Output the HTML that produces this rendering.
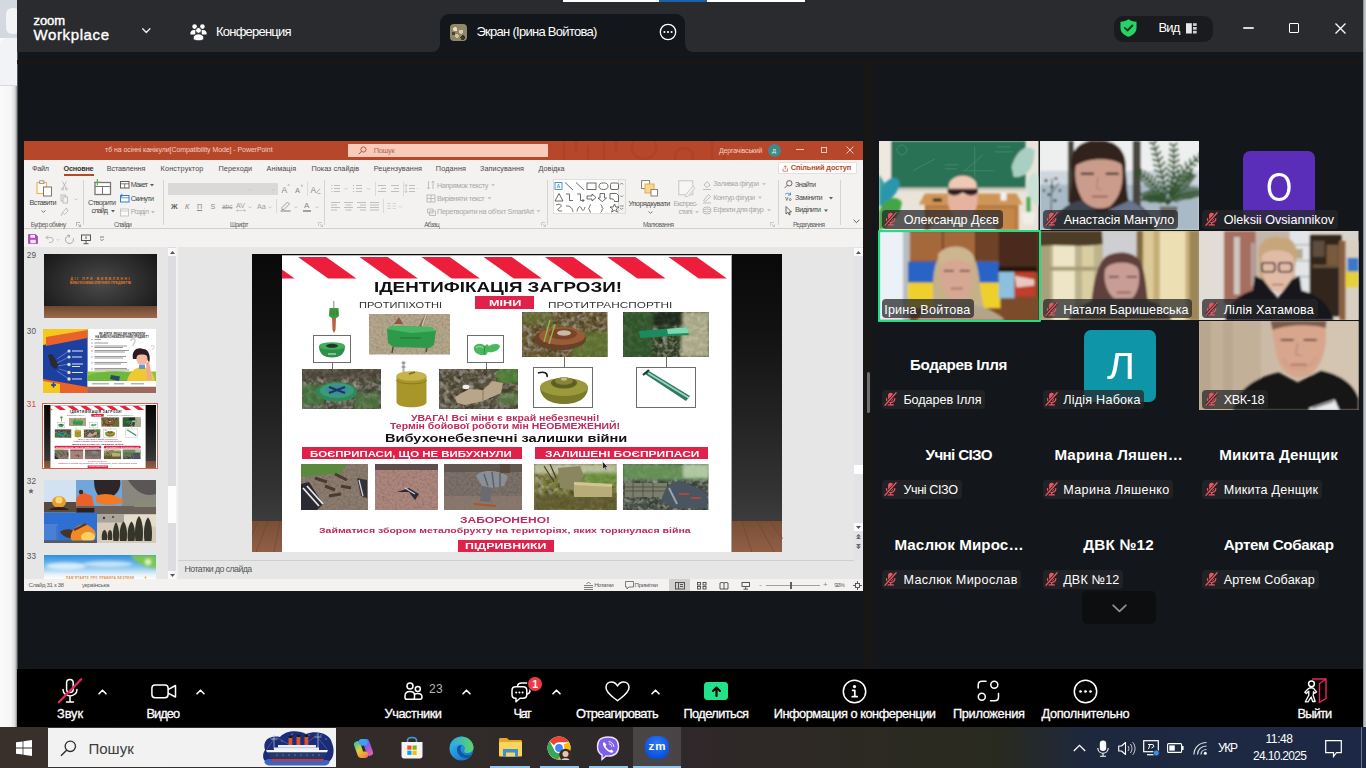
<!DOCTYPE html>
<html lang="uk"><head><meta charset="utf-8"><title>Zoom Workplace</title>
<style>
*{box-sizing:border-box;margin:0;padding:0}
html,body{width:1366px;height:768px;overflow:hidden;background:#13161a}
body{position:relative;font-family:"Liberation Sans",sans-serif;color:#fff}
.a{position:absolute}
.t{position:absolute;white-space:nowrap;line-height:1}
svg{position:absolute;overflow:visible}
</style></head><body>
<!-- left desktop strip -->
<div class="a" id="strip" style="left:0;top:0;width:18px;height:727px;background:linear-gradient(90deg,#fbfbfb 0,#f6f6f6 11px,#d9d9d9 15px,#8a8a8a 17px,#222 18px)"></div>
<div class="a" style="left:0;top:0;width:17px;height:38px;background:#d4d9e1"></div>
<div class="a" style="left:6px;top:8px;width:14px;height:26px;background:#f3f4f6;border-radius:6px"></div>
<div class="a" style="left:0;top:38px;width:17px;height:48px;background:#f1f3f6;border-radius:8px 0 0 0"></div>
<div class="a" style="left:0;top:85px;width:17px;height:1px;background:#d8d8d8"></div>

<!-- ZOOM TITLE BAR -->
<div class="a" id="ztitle" style="left:17px;top:0;width:1349px;height:52px;background:#2a2b2e"></div>
<div class="a" style="left:563px;top:0;width:242px;height:1.500px;background:#fff"></div>
<div class="a" style="left:659px;top:0;width:48px;height:1.500px;background:#1d5fa8"></div>
<div class="a" id="ztab" style="left:440px;top:14px;width:245px;height:38px;background:#13161a;border-radius:9px 9px 0 0"></div>


<div class="a" style="left:1363px;top:0;width:3px;height:727px;background:linear-gradient(90deg,#6a6c6f,#b4b7bb 1px,#c4c7ca)"></div>
<!-- flares of active tab -->
<svg style="left:432px;top:44px" width="8" height="8"><path d="M8 0V8H0A8 8 0 0 0 8 0Z" fill="#13161a"></path></svg>
<svg style="left:685px;top:44px" width="8" height="8"><path d="M0 0V8H8A8 8 0 0 1 0 0Z" fill="#13161a"></path></svg>
<span class="t" style="left: 33.5px; font-size: 13px; color: rgb(255, 255, 255); -webkit-text-stroke: 0.45px rgb(255, 255, 255); letter-spacing: -0.099px; top: 14.3px;">zoom</span>
<span class="t" style="left: 33.5px; font-size: 15px; color: rgb(255, 255, 255); -webkit-text-stroke: 0.35px rgb(255, 255, 255); letter-spacing: 0.613px; top: 27.1px;">Workplace</span>
<svg style="left:142px;top:28px" width="9" height="6" viewBox="0 0 9 6"><path d="M.7.8 4.3 4.4 7.9.8" fill="none" stroke="#e8e8e8" stroke-width="1.4" stroke-linecap="round" stroke-linejoin="round"></path></svg>
<!-- people icon -->
<svg style="left:190px;top:23.5px" width="17" height="17" viewBox="0 0 17 17" fill="#fff"><circle cx="4.6" cy="2.6" r="2.3"></circle><circle cx="12.4" cy="2.6" r="2.3"></circle><circle cx="8.5" cy="6.4" r="2.9" stroke="#2a2b2e" stroke-width="1"></circle><path d="M.3 9.800C.3 7.400 1.800 6 4 6h1.300v4.500H.9C.5 10.500.3 10.200.3 9.800ZM16.700 9.800C16.700 7.400 15.200 6 13 6h-1.300v4.500h4.400c.4 0 .6-.3.600-.7Z"></path><path d="M3.200 14.200c0-2.700 2.300-4.300 5.300-4.300s5.300 1.600 5.300 4.300c0 1.400-1.700 2.500-5.300 2.500s-5.300-1.100-5.300-2.500Z" stroke="#2a2b2e" stroke-width=".8"></path></svg>
<span class="t" style="left: 216px; font-size: 13px; color: rgb(255, 255, 255); letter-spacing: -0.78px; top: 24.6px;">Конференция</span>
<!-- tab avatar -->
<div class="a" style="left:450px;top:24px;width:17px;height:16.5px;border-radius:4px;background:
radial-gradient(circle at 30% 30%,#e9dfc0 0 12%,transparent 13%),radial-gradient(circle at 65% 45%,#d8cba2 0 14%,transparent 15%),radial-gradient(circle at 40% 70%,#cfc39a 0 12%,transparent 13%),radial-gradient(circle at 75% 80%,#3a352c 0 12%,transparent 13%),radial-gradient(circle at 20% 55%,#4a4436 0 10%,transparent 11%),#8f8768"></div>
<span class="t" style="left: 476.4px; font-size: 13px; color: rgb(255, 255, 255); letter-spacing: -0.713px; top: 24.7px;">Экран (Ірина Войтова)</span>
<svg style="left:659px;top:23px" width="18" height="18" viewBox="0 0 18 18"><circle cx="9" cy="9" r="7.7" fill="none" stroke="#fff" stroke-width="1.3"></circle><circle cx="5.400" cy="9" r="1.050" fill="#fff"></circle><circle cx="9" cy="9" r="1.050" fill="#fff"></circle><circle cx="12.600" cy="9" r="1.050" fill="#fff"></circle></svg>
<!-- view pill -->
<div class="a" style="left:1113.500px;top:16px;width:99.500px;height:26px;border-radius:9px;background:#1a1b1e"></div>
<svg style="left:1120px;top:19px" width="17" height="18" viewBox="0 0 17 18"><path d="M8.500.300C10.600 1.900 13.300 2.700 16.500 2.800V9c0 4.200-3.300 7.200-8 8.800C3.800 16.200.500 13.200.500 9V2.800C3.700 2.700 6.400 1.900 8.500.300Z" fill="#26d366"></path><path d="M4.800 8.900 7.500 11.500 12.400 6.500" fill="none" stroke="#173a25" stroke-width="1.900" stroke-linecap="round" stroke-linejoin="round"></path></svg>
<span class="t" style="left: 1158.4px; font-size: 13px; color: rgb(255, 255, 255); letter-spacing: -0.766px; top: 21px;">Вид</span>
<svg style="left:1186px;top:23px" width="11" height="11" viewBox="0 0 11 11"><rect x="0" y=".2" width="5.800" height="10.300" fill="#e9e9e9"></rect><rect x="7" y=".2" width="3.700" height="2.700" fill="#cfcfcf"></rect><rect x="7" y="4" width="3.700" height="2.700" fill="#cfcfcf"></rect><rect x="7" y="7.800" width="3.700" height="2.700" fill="#cfcfcf"></rect></svg>
<div class="a" style="left:1242.500px;top:27.300px;width:11.500px;height:1.500px;background:#d9d9d9;border-radius:1px"></div>
<div class="a" style="left:1288.700px;top:23px;width:10.600px;height:10.300px;border:1.400px solid #fff;border-radius:1px"></div>
<svg style="left:1334.500px;top:23px" width="11" height="11" viewBox="0 0 11 11"><path d="M.5.500 10.500 10.500M10.500.500.500 10.500" stroke="#fff" stroke-width="1.300"></path></svg>

<!-- ===== POWERPOINT WINDOW (shared screen) ===== -->
<div class="a" id="ppt" style="left:24px;top:141px;width:839px;height:450px;background:#e6e6e6;overflow:hidden">
<style>
#ppt .t{color:#4a4a4a;font-size:7.250px}
#ppt .g{color:#a9a7a5}
#ppt .lb{color:#605e5c;font-size:6.4px}
#ppt .sep{position:absolute;top:39px;width:1px;height:45px;background:#d6d4d2}
</style>
<!-- title bar -->
<div class="a" style="left:0;top:0;width:839px;height:19px;background:#b7472a"></div>
<svg style="left:520px;top:0" width="200" height="19" viewBox="0 0 200 19" opacity=".32"><g fill="none" stroke="#9f3a20" stroke-width="2.5"><circle cx="100" cy="6" r="12"></circle><circle cx="140" cy="16" r="9"></circle><path d="M20 0V19M32 0V12M44 4V19M60 0V19M72 0V10M168 0V19M180 6V19"></path></g></svg>
<span class="t" style="left: 81px; font-size: 7px; color: rgb(243, 207, 195); letter-spacing: -0.073px; top: 5.47px;">тб на осінні канікули[Compatibility Mode]  -  PowerPoint</span>
<div class="a" style="left:324px;top:3px;width:200px;height:13px;background:#f9cbb9"></div>
<svg style="left:334px;top:5px" width="9" height="9" viewBox="0 0 9 9"><circle cx="5.400" cy="3.500" r="2.600" fill="none" stroke="#a0452f" stroke-width=".8"></circle><path d="M3.500 5.400.8 8.200" stroke="#a0452f" stroke-width=".9"></path></svg>
<span class="t" style="left: 349.7px; font-size: 7.4px; color: rgb(176, 106, 85); letter-spacing: -0.32px; top: 5.74px;">Пошук</span>
<span class="t" style="left: 695px; font-size: 7px; color: rgb(243, 207, 195); letter-spacing: -0.179px; top: 5.87px;">Дергачівський</span>
<div class="a" style="left:744px;top:3px;width:13px;height:13px;border-radius:50%;background:#3f8a8c"></div>
<span class="t" style="left: 748px; font-size: 6px; color: rgb(231, 243, 243); top: 6.52px;">Д</span>
<div class="a" style="left:772px;top:8px;width:8px;height:1px;background:#f0c9bd"></div>
<div class="a" style="left:797px;top:6px;width:6px;height:6px;border:1px solid #f0c9bd"></div>
<svg style="left:822px;top:5px" width="8" height="8" viewBox="0 0 8 8"><path d="M.5.500 7.500 7.500M7.500.500.500 7.500" stroke="#f6ddd5" stroke-width=".9"></path></svg>
<!-- tab row + ribbon -->
<div class="a" style="left:0;top:19px;width:839px;height:68px;background:#f3f2f1"></div>
<div class="a" style="left:0;top:87px;width:839px;height:1px;background:#d2d0ce"></div>
<div class="a" style="left:0;top:88px;width:839px;height:18px;background:#f3f2f1"></div>
<span class="t" style="left: 8px; letter-spacing: -0.276px; top: 23.66px;">Файл</span>
<span class="t" style="left: 39.6px; font-weight: bold; color: rgb(51, 51, 51); letter-spacing: -0.227px; top: 23.66px;">Основне</span>
<div class="a" style="left:39.500px;top:33.300px;width:30.500px;height:1.700px;background:#b7472a"></div>
<span class="t" style="left: 82.7px; letter-spacing: -0.103px; top: 23.66px;">Вставлення</span>
<span class="t" style="left: 136.6px; letter-spacing: 0.146px; top: 23.66px;">Конструктор</span>
<span class="t" style="left: 194.4px; letter-spacing: 0.134px; top: 23.66px;">Переходи</span>
<span class="t" style="left: 242.5px; letter-spacing: 0.078px; top: 23.66px;">Анімація</span>
<span class="t" style="left: 287.5px; letter-spacing: 0.017px; top: 23.66px;">Показ слайдів</span>
<span class="t" style="left: 349.7px; letter-spacing: 0.094px; top: 23.66px;">Рецензування</span>
<span class="t" style="left: 411.8px; letter-spacing: 0.153px; top: 23.66px;">Подання</span>
<span class="t" style="left: 456px; letter-spacing: 0.063px; top: 23.66px;">Записування</span>
<span class="t" style="left: 514.6px; letter-spacing: -0.016px; top: 23.66px;">Довідка</span>
<div class="a" style="left:754px;top:21px;width:79px;height:12px;background:#fff;border:1px solid #e3dfdc;border-radius:1px"></div>
<svg style="left:757.500px;top:23.500px" width="7" height="7" viewBox="0 0 7 7"><path d="M1 3.500V6.200H5.500V3.500M3.300 4.300V.8M1.800 2.200 3.300.7 4.800 2.200" fill="none" stroke="#c0583d" stroke-width=".7"></path></svg>
<span class="t" style="left: 766.8px; font-weight: bold; color: rgb(183, 71, 42); font-size: 7.4px; letter-spacing: -0.128px; top: 23.44px;">Спільний доступ</span>
<!-- Clipboard group -->
<svg style="left:12px;top:39px" width="17" height="17" viewBox="0 0 17 17"><rect x="1" y="2.500" width="9.500" height="11" fill="#fdfaf0" stroke="#e6b45a" stroke-width="1.100"></rect><rect x="3.700" y=".8" width="4.200" height="2.800" fill="#f3f2f1" stroke="#8a8886" stroke-width=".8"></rect><rect x="7.500" y="7" width="8" height="9" fill="#fff" stroke="#6b6968" stroke-width=".9"></rect></svg>
<span class="t" style="left: 5.6px; letter-spacing: -0.574px; top: 57.66px;">Вставити</span>
<svg style="left:16.500px;top:69px" width="5" height="3" viewBox="0 0 5 3"><path d="M.5.500 2.500 2.300 4.500.500" fill="none" stroke="#605e5c" stroke-width=".8"></path></svg>
<svg style="left:36px;top:39.500px" width="9" height="37" viewBox="0 0 9 37" fill="none" stroke="#b3b0ad" stroke-width=".8"><path d="M2.500.500 6 7M6.500.500 3 7"></path><circle cx="2.600" cy="8" r="1"></circle><circle cx="6.400" cy="8" r="1"></circle><rect x="1" y="14" width="4.500" height="6"></rect><rect x="3" y="16" width="4.500" height="6" fill="#f3f2f1"></rect><path d="M6.500 27 2.500 31.500 4.500 33.500 8 30ZM2.500 32 1 35"></path></svg>
<svg style="left:50px;top:57px" width="4" height="3" viewBox="0 0 4 3"><path d="M.4.500 2 2 3.600.500" fill="none" stroke="#bbb" stroke-width=".7"></path></svg>
<span class="t lb" style="left: 6.7px; letter-spacing: -0.494px; top: 80.58px;">Буфер обміну</span>
<svg style="left:51.500px;top:81px" width="5" height="5" viewBox="0 0 5 5"><path d="M.5 4V.500H4M2 2 4.500 4.500M4.500 2.500V4.500H2.500" fill="none" stroke="#8a8886" stroke-width=".6"></path></svg>
<div class="sep" style="left:58.500px"></div>
<!-- Slides group -->
<svg style="left:69px;top:37.500px" width="19" height="17" viewBox="0 0 19 17" fill="none"><rect x="2" y="3.500" width="15.500" height="12" fill="#fff" stroke="#797775" stroke-width="1.300"></rect><path d="M2 7.500H17.500M9.500 7.500V15.500" stroke="#797775" stroke-width="1"></path><path d="M4.300 0V6.500M1 3.300H7.600" stroke="#4cae4c" stroke-width="1.100"></path></svg>
<span class="t" style="left: 64px; letter-spacing: -0.545px; top: 57.66px;">Створити</span>
<span class="t" style="left: 67.5px; letter-spacing: -0.918px; top: 66.36px;">слайд</span>
<svg style="left:86.500px;top:68.500px" width="4" height="3" viewBox="0 0 4 3"><path d="M0 0H4L2 2.500Z" fill="#605e5c"></path></svg>
<svg style="left:95.500px;top:39.500px" width="10" height="36" viewBox="0 0 10 36" fill="none"><rect x=".5" y=".5" width="8.500" height="6.500" fill="#fff" stroke="#605e5c" stroke-width="1"></rect><path d="M.5 2.800H9M4.700 2.800V7" stroke="#605e5c" stroke-width=".8"></path><rect x=".5" y="14.500" width="8.500" height="6.500" fill="#fff" stroke="#2b7cd3" stroke-width="1"></rect><path d="M.5 16.800H9M1 13 3 14.500 1 16" stroke="#2b7cd3" stroke-width=".8"></path><rect x=".5" y="28" width="8" height="7" fill="#fafafa" stroke="#c2c0be" stroke-width=".9"></rect><path d="M.5 30H8.500" stroke="#c2c0be" stroke-width=".8"></path></svg>
<span class="t" style="left: 106.7px; letter-spacing: -0.808px; top: 40.36px;">Макет</span>
<svg style="left:126px;top:43px" width="4" height="3" viewBox="0 0 4 3"><path d="M0 0H4L2 2.500Z" fill="#605e5c"></path></svg>
<span class="t" style="left: 106.7px; letter-spacing: -0.695px; top: 53.86px;">Скинути</span>
<span class="t g" style="left: 106.7px; letter-spacing: -0.684px; top: 66.86px;">Розділ</span>
<svg style="left:127px;top:69.500px" width="4" height="3" viewBox="0 0 4 3"><path d="M0 0H4L2 2.500Z" fill="#c2c0be"></path></svg>
<span class="t lb" style="left: 89.9px; letter-spacing: -0.956px; top: 80.58px;">Слайди</span>
<div class="sep" style="left:139.400px"></div>
<!-- Font group -->
<div class="a" style="left:144.200px;top:42.200px;width:109.600px;height:12.300px;background:#dbd9d8"></div>
<svg style="left:224px;top:47px" width="28" height="4" viewBox="0 0 28 4"><path d="M.5.800 2 2.500 3.500.8M23.500.8 25 2.500 26.500.8" fill="none" stroke="#c3c1bf" stroke-width=".7"></path></svg>
<span class="t" style="left: 257.5px; color: rgb(138, 136, 134); font-size: 8.5px; top: 45.1px;">A</span><span class="t" style="left: 263.5px; color: rgb(138, 136, 134); font-size: 4.5px; top: 43.69px;">^</span>
<span class="t" style="left: 271px; color: rgb(138, 136, 134); font-size: 7.5px; top: 45.95px;">A</span><span class="t" style="left: 276.5px; color: rgb(138, 136, 134); font-size: 4.5px; top: 43.69px;">˅</span>
<span class="t" style="left: 286.5px; color: rgb(138, 136, 134); font-size: 8.5px; top: 45.1px;">A</span><svg style="left:292px;top:47px" width="5" height="6" viewBox="0 0 5 6"><path d="M.5 5 4 .500M1.500 5.500H4.500" stroke="#a19f9d" stroke-width=".8" fill="none"></path></svg>
<div class="a" style="left:283px;top:41px;width:1px;height:14px;background:#dcdad8"></div>
<span class="t" style="left: 147px; font-weight: bold; color: rgb(96, 94, 92); top: 62.36px;">Ж</span>
<span class="t" style="left: 161px; font-style: italic; color: rgb(138, 136, 134); top: 62.36px;">К</span>
<span class="t" style="left: 173px; color: rgb(138, 136, 134); text-decoration: underline; top: 62.36px;">П</span>
<span class="t" style="left: 186.5px; color: rgb(138, 136, 134); top: 62.36px;">S</span>
<span class="t" style="left: 198px; color: rgb(161, 159, 157); font-size: 6.5px; text-decoration: line-through; top: 62.5px;">abc</span>
<span class="t" style="left: 212px; color: rgb(161, 159, 157); font-size: 7px; letter-spacing: 0.172px; top: 61.07px;">AV</span>
<svg style="left:212px;top:68px" width="10" height="3" viewBox="0 0 10 3"><path d="M.5 1.500H9.500M2 .300.500 1.500 2 2.700M8 .300 9.500 1.500 8 2.700" fill="none" stroke="#b3b0ad" stroke-width=".6"></path></svg>
<svg style="left:223.500px;top:64.500px" width="4" height="3" viewBox="0 0 4 3"><path d="M.4.500 2 2 3.600.500" fill="none" stroke="#bbb" stroke-width=".7"></path></svg>
<span class="t" style="left: 233px; color: rgb(161, 159, 157); top: 62.36px;">Aa</span>
<svg style="left:243.500px;top:64.500px" width="4" height="3" viewBox="0 0 4 3"><path d="M.4.500 2 2 3.600.500" fill="none" stroke="#bbb" stroke-width=".7"></path></svg>
<div class="a" style="left:251.500px;top:58px;width:1px;height:14px;background:#dcdad8"></div>
<svg style="left:256px;top:60px" width="11" height="11" viewBox="0 0 11 11" fill="none"><path d="M2 6.500 7.500 1 9.500 3 4 8.500H2Z" stroke="#8a8886" stroke-width=".8"></path><path d="M.5 10H10.500" stroke="#a19f9d" stroke-width="1.400"></path></svg>
<svg style="left:269.500px;top:64.500px" width="4" height="3" viewBox="0 0 4 3"><path d="M.4.500 2 2 3.600.500" fill="none" stroke="#bbb" stroke-width=".7"></path></svg>
<span class="t" style="left: 280px; color: rgb(138, 136, 134); font-size: 8px; top: 61.03px;">A</span>
<div class="a" style="left:278.500px;top:69px;width:8.500px;height:1.600px;background:#a19f9d"></div>
<svg style="left:291px;top:64.500px" width="4" height="3" viewBox="0 0 4 3"><path d="M.4.500 2 2 3.600.500" fill="none" stroke="#bbb" stroke-width=".7"></path></svg>
<span class="t lb" style="left: 206px; letter-spacing: -0.633px; top: 80.58px;">Шрифт</span>
<svg style="left:294px;top:81px" width="5" height="5" viewBox="0 0 5 5"><path d="M.5 4V.500H4M2 2 4.500 4.500M4.500 2.500V4.500H2.500" fill="none" stroke="#b3b0ad" stroke-width=".6"></path></svg>
<div class="sep" style="left:300.400px"></div>
<!-- Paragraph group -->
<svg style="left:306px;top:43px" width="88" height="27" viewBox="0 0 88 27" fill="none" stroke="#b3b0ad" stroke-width=".8">
<path d="M4 1.500H10M4 4.500H10M4 7.500H10M26 1.500H32M26 4.500H32M26 7.500H32M48 1.500H56M51 4.500H56M48 7.500H56M61 1.500H69M64 4.500H69M61 7.500H69M79 1.500H85M79 4.500H85M79 7.500H85"></path>
<path d="M1.500 1.500H2.500M1.500 4.500H2.500M1.500 7.500H2.500M23 1.500H24M23 4.500H24M23 7.500H24" stroke-width="1.200"></path>
<path d="M76 .500V8.500M74.500 2 76 .500 77.500 2M74.500 7 76 8.500 77.500 7" stroke-width=".6"></path>
<path d="M14.500 4 16 5.500 17.500 4M37 4 38.500 5.500 40 4M87 4 88 5" stroke-width=".6"></path>
<path d="M1 18.500H10M1 21H7M1 23.500H10M1 26H7M14 18.500H23M15.500 21H21.500M14 23.500H23M15.500 26H21.500M27 18.500H36M30 21H36M27 23.500H36M30 26H36M40 18.500H49M40 21H49M40 23.500H49M40 26H49"></path>
<path d="M57 19.500H61M57 22H61M57 24.500H61M62.500 19.500H66M62.500 22H66M62.500 24.500H66M69 22 70.500 23.500 72 22" stroke="#d0cecc"></path>
</svg>
<div class="a" style="left:350.500px;top:41px;width:1px;height:14px;background:#dcdad8"></div>
<div class="a" style="left:378.500px;top:41px;width:1px;height:14px;background:#dcdad8"></div>
<div class="a" style="left:359px;top:58px;width:1px;height:14px;background:#dcdad8"></div>
<svg style="left:402px;top:39px" width="11" height="38" viewBox="0 0 11 38" fill="none" stroke="#b3b0ad" stroke-width=".8"><path d="M2.500 1V9M1 7.500 2.500 9 4 7.500M7 1V9M5.500 2.500 7 1 8.500 2.500"></path><rect x="1" y="15" width="8" height="7"></rect><path d="M5 15V22M1 18.500H9"></path><path d="M1.500 29H7V33H1.500ZM3.500 31H9.500V35.500H3.500Z"></path></svg>
<span class="t g" style="left: 413px; letter-spacing: -0.361px; top: 40.86px;">Напрямок тексту</span>
<span class="t g" style="left: 413px; letter-spacing: -0.391px; top: 53.86px;">Вирівняти текст</span>
<span class="t g" style="left: 413px; letter-spacing: -0.316px; top: 66.86px;">Перетворити на об'єкт SmartArt</span>
<svg style="left:467px;top:43px" width="50" height="31" viewBox="0 0 50 31"><path d="M0 0H4L2 2.500ZM-3.500 13H.5L-1.500 15.500ZM45.500 26H49.500L47.500 28.500Z" fill="#c8c6c4"></path></svg>
<span class="t lb" style="left: 400.2px; letter-spacing: -0.609px; top: 80.58px;">Абзац</span>
<svg style="left:517px;top:81px" width="5" height="5" viewBox="0 0 5 5"><path d="M.5 4V.500H4M2 2 4.500 4.500M4.500 2.500V4.500H2.500" fill="none" stroke="#b3b0ad" stroke-width=".6"></path></svg>
<div class="sep" style="left:523.200px"></div>
<!-- Drawing group -->
<div class="a" style="left:528.600px;top:38.400px;width:73.400px;height:35px;background:#fff;border:1px solid #e1dfdd"></div>
<div class="a" style="left:593.700px;top:38.400px;width:8.300px;height:35px;background:#f3f2f1;border:1px solid #dcdad8"></div>
<svg style="left:530px;top:40px" width="72" height="33" viewBox="0 0 72 33" fill="none" stroke="#484644" stroke-width=".8">
<rect x="1" y="1.500" width="7" height="7" stroke="#2b7cd3"></rect><path d="M3 7 4.500 3 6 7M3.500 5.800H5.500" stroke="#2b7cd3" stroke-width=".6"></path>
<path d="M11 1.500 19 9M22 1.500 30 9"></path><rect x="33" y="2" width="9" height="6.500"></rect><ellipse cx="49.500" cy="5.200" rx="4.500" ry="3.300"></ellipse><rect x="56.500" y="2" width="8" height="6.500" rx="1.500"></rect>
<path d="M1 20 5 12.500 9 20Z"></path><path d="M12 13H15.500V19.500H19M23 13H26.500V19.500H30M28.500 18 30 19.500 28.500 21"></path><path d="M33 15H38V13L42 16.500 38 20V18H33Z"></path><path d="M46 12.500H50.500V17H52.500L48.300 20.700 44 17H46Z"></path><path d="M56 12.500H62.500L64.500 14.500V20.500H60.500C60.500 18.500 59 17.500 56 18Z"></path>
<path d="M2 24C6 22 9 24.500 6 26.500 3 28 2.500 30.500 8 30M12 25C16 24.500 18.500 27 19 31M23 30.500C24 25.500 26 24 27.500 27.500 28.500 30.500 30 30 31 26"></path><path d="M37 23.500C35 24 36 27 34.500 27.500 36 28 35 31 37 31.500M46.500 23.500C48.500 24 47.500 27 49 27.500 47.500 28 48.500 31 46.500 31.500"></path><path d="M60.500 23 61.800 26H65L62.400 28 63.400 31.200 60.500 29.300 57.600 31.200 58.600 28 56 26H59.200Z"></path>
<path d="M66.200 3.500 67.700 2 69.200 3.500M66.200 14.500 67.700 16 69.200 14.500M65.700 25H69.700M66.200 27 67.700 28.500 69.200 27" stroke-width=".6"></path></svg>
<svg style="left:617px;top:39px" width="18" height="17" viewBox="0 0 18 17"><rect x=".6" y=".6" width="8" height="8" fill="#fff" stroke="#797775" stroke-width=".9"></rect><rect x="4" y="4" width="9" height="9" fill="#fbd88a" stroke="#e8a33d" stroke-width=".9"></rect><rect x="10" y="9.500" width="6.500" height="6.500" fill="#fff" stroke="#797775" stroke-width=".9"></rect></svg>
<span class="t" style="left: 604.4px; letter-spacing: -0.386px; top: 59.36px;">Упорядкувати</span>
<svg style="left:623.500px;top:69.500px" width="5" height="3" viewBox="0 0 5 3"><path d="M.5.500 2.500 2.300 4.500.500" fill="none" stroke="#605e5c" stroke-width=".8"></path></svg>
<svg style="left:654px;top:39px" width="18" height="18" viewBox="0 0 18 18" fill="none"><rect x=".8" y=".8" width="14" height="14" fill="#f7f6f5" stroke="#c8c6c4" stroke-width="1"></rect><path d="M7 15.500 15 6 17 8 10 16.500H7Z" fill="#f3f2f1" stroke="#c8c6c4" stroke-width=".9"></path></svg>
<span class="t g" style="left: 649.5px; letter-spacing: -0.793px; top: 59.36px;">Експрес-</span>
<span class="t g" style="left: 654.5px; letter-spacing: -0.711px; top: 67.36px;">стилі</span>
<svg style="left:671px;top:69.500px" width="4" height="3" viewBox="0 0 4 3"><path d="M0 0H4L2 2.500Z" fill="#c8c6c4"></path></svg>
<svg style="left:678px;top:38.500px" width="10" height="36" viewBox="0 0 10 36" fill="none" stroke="#b3b0ad" stroke-width=".8"><path d="M2 5 5 1.500 8 5 5 7.500ZM1 9.500H9"></path><path d="M1.500 20.500 6.500 14.500 8.500 16.500 3.500 21.500ZM1 23H9"></path><ellipse cx="5" cy="29.500" rx="4" ry="2.500"></ellipse><ellipse cx="5" cy="31.500" rx="4" ry="2.500"></ellipse></svg>
<span class="t g" style="left: 689.2px; letter-spacing: -0.46px; top: 39.36px;">Заливка фігури</span>
<span class="t g" style="left: 689.2px; letter-spacing: -0.426px; top: 52.86px;">Контур фігури</span>
<span class="t g" style="left: 689.2px; letter-spacing: -0.605px; top: 65.36px;">Ефекти для фігур</span>
<svg style="left:737px;top:42px" width="8" height="29" viewBox="0 0 8 29"><path d="M1 0H5L3 2.500ZM-3 13.500H1L-1 16ZM6 26H10L8 28.500Z" fill="#c8c6c4"></path></svg>
<span class="t lb" style="left: 618.9px; letter-spacing: -0.484px; top: 80.58px;">Малювання</span>
<svg style="left:745.500px;top:81px" width="5" height="5" viewBox="0 0 5 5"><path d="M.5 4V.500H4M2 2 4.500 4.500M4.500 2.500V4.500H2.500" fill="none" stroke="#b3b0ad" stroke-width=".6"></path></svg>
<div class="sep" style="left:754.400px"></div>
<!-- Editing group -->
<svg style="left:759.500px;top:38.500px" width="9" height="36" viewBox="0 0 9 36" fill="none" stroke="#484644" stroke-width=".8"><circle cx="5.300" cy="3.300" r="2.700"></circle><path d="M3.400 5.200.7 8"></path><path d="M1 14.500C3 12.500 5.500 13 6.500 15M6.500 12.500V15H4" stroke="#2b7cd3"></path><path d="M1.500 17 2.800 20.500M4 17 2.800 20.500M5.500 18.500C7.500 18 8 20.500 6 20.500 5 20.500 5 19 6 19" stroke-width=".6"></path><path d="M2 26.500V34L4 32.300 5.300 35 6.300 34.500 5 32H7.500Z"></path></svg>
<span class="t" style="left: 771px; letter-spacing: -0.569px; top: 39.86px;">Знайти</span>
<span class="t" style="left: 771px; letter-spacing: -0.405px; top: 52.86px;">Замінити</span>
<span class="t" style="left: 771px; letter-spacing: -0.627px; top: 65.36px;">Виділити</span>
<svg style="left:803px;top:55.500px" width="6" height="16" viewBox="0 0 6 16"><path d="M2 0H6L4 2.500ZM-3 12.500H1L-1 15Z" fill="#605e5c"></path></svg>
<span class="t lb" style="left: 768.9px; letter-spacing: -0.561px; top: 80.58px;">Редагування</span>
<div class="sep" style="left:815.700px"></div>
<svg style="left:828.500px;top:78px" width="7" height="5" viewBox="0 0 7 5"><path d="M.6.800 3.500 3.700 6.400.8" fill="none" stroke="#484644" stroke-width=".9"></path></svg>
<!-- QAT -->
<svg style="left:4px;top:92.500px" width="80" height="11" viewBox="0 0 80 11" fill="none">
<path d="M.6.600H7.600L9.400 2.300V9.400H.6Z" fill="#b04fc0" stroke="#8e3a9d" stroke-width=".8"></path><rect x="2.300" y=".8" width="4.700" height="3" fill="#f2e4f5"></rect><rect x="2.300" y="5.800" width="5.500" height="3.500" fill="#f2e4f5"></rect>
<path d="M18 3.500H23C26 3.500 26 8.500 22.500 8.500H21M20 1.500 18 3.500 20 5.500" stroke="#b3b0ad" stroke-width=".9"></path><path d="M28.500 5 30 6.500 31.500 5" stroke="#c2c0be" stroke-width=".7"></path>
<path d="M41.500 1.500A4 4 0 1 0 45.300 4.300M39.500 1 41.800 1.500 41 3.700" stroke="#a19f9d" stroke-width=".9"></path>
<rect x="53.500" y="1" width="9" height="5.500" stroke="#484644" stroke-width=".9"></rect><path d="M58 6.500V9.500M55.500 9.700H60.500M58 2.300V5" stroke="#484644" stroke-width=".9"></path>
<path d="M72 3H76M72.300 5 74 6.700 75.700 5" stroke="#605e5c" stroke-width=".8"></path></svg>
<div class="a" id="pb" style="left:-24px;top:-141px;width:0;height:0">
<style>
#pb .n{color:#555;font-size:8.2px}
#pb .ph{position:absolute;overflow:hidden}
#pb .bx{position:absolute;background:#fff;border:1px solid #6d6d6d}
#pb .rb{position:absolute;background:#e0214a}
#pb .rt{color:#fff;font-weight:bold}
#pb .cr{color:#bd2a5b;font-weight:bold}
</style>
<svg width="0" height="0" style="left:0;top:0"><defs>
<filter id="nz" x="0" y="0" width="100%" height="100%"><feTurbulence type="fractalNoise" baseFrequency=".16" numOctaves="3" seed="4" result="n"></feTurbulence><feColorMatrix in="n" type="matrix" values="0 0 0 0 0 0 0 0 0 0 0 0 0 0 0 1.5 0 0 0 -.6" result="a"></feColorMatrix><feComposite in="a" in2="SourceGraphic" operator="in" result="d"></feComposite><feTurbulence type="fractalNoise" baseFrequency=".2" numOctaves="2" seed="11" result="n2"></feTurbulence><feColorMatrix in="n2" type="matrix" values="0 0 0 0 .85 0 0 0 0 .82 0 0 0 0 .7 0 .8 0 0 -.36" result="b"></feColorMatrix><feComposite in="b" in2="SourceGraphic" operator="in" result="l"></feComposite><feMerge result="m"><feMergeNode in="SourceGraphic"></feMergeNode><feMergeNode in="d"></feMergeNode><feMergeNode in="l"></feMergeNode></feMerge><feGaussianBlur in="m" stdDeviation=".45"></feGaussianBlur></filter>
<filter id="nzs" x="0" y="0" width="100%" height="100%"><feTurbulence type="fractalNoise" baseFrequency=".4" numOctaves="2" seed="7" result="n"></feTurbulence><feColorMatrix in="n" type="matrix" values="0 0 0 0 0 0 0 0 0 0 0 0 0 0 0 .7 0 0 0 -.27" result="a"></feColorMatrix><feComposite in="a" in2="SourceGraphic" operator="in" result="d"></feComposite><feMerge><feMergeNode in="SourceGraphic"></feMergeNode><feMergeNode in="d"></feMergeNode></feMerge></filter>
<filter id="bl1"><feGaussianBlur stdDeviation=".75"></feGaussianBlur></filter>
<filter id="bl2"><feGaussianBlur stdDeviation="1.5"></feGaussianBlur></filter>
</defs></svg>
<!-- thumbnail pane -->
<div class="a" style="left:167.500px;top:247px;width:8.500px;height:332px;background:#dddde1"></div>
<div class="a" style="left:167.500px;top:248px;width:8.500px;height:8px;background:#fafafa"></div>
<svg style="left:169.500px;top:250.500px" width="5" height="3" viewBox="0 0 5 3"><path d="M0 3H5L2.500 0Z" fill="#555"></path></svg>
<div class="a" style="left:167.500px;top:486px;width:8.500px;height:36.500px;background:#fdfdfd"></div>
<div class="a" style="left:167.500px;top:570.500px;width:8.500px;height:8px;background:#fafafa"></div>
<svg style="left:169.500px;top:573.500px" width="5" height="3" viewBox="0 0 5 3"><path d="M0 0H5L2.500 3Z" fill="#555"></path></svg>
<div class="a" style="left:176px;top:247px;width:2px;height:332px;background:#f1f1f1"></div>
<span class="t n" style="left: 26.8px; letter-spacing: 0.091px; top: 252.46px;">29</span>
<span class="t n" style="left: 26.8px; letter-spacing: 0.091px; top: 327.66px;">30</span>
<span class="t n" style="left: 26.8px; color: rgb(200, 80, 47); letter-spacing: 0.091px; top: 401.26px;">31</span>
<span class="t n" style="left: 26.8px; letter-spacing: 0.091px; top: 478.26px;">32</span>
<span class="t n" style="left: 26.8px; letter-spacing: 0.091px; top: 552.66px;">33</span>
<svg style="left:27.500px;top:488px" width="6" height="6" viewBox="0 0 10 10"><path d="M5 .5 6.300 3.700 9.700 3.900 7.100 6.100 8 9.500 5 7.600 2 9.500 2.900 6.100.3 3.900 3.700 3.700Z" fill="#666"></path></svg>
<!-- thumb 29 -->
<div class="ph" style="left:43.500px;top:254px;width:113.500px;height:63.500px;background:radial-gradient(ellipse 70% 80% at 50% 45%,#4a4a4a,#2b2b2b 55%,#111 100%)">
<div class="a" style="left:0;top:52px;width:114px;height:12px;background:linear-gradient(#6d4630,#9a6b4b)"></div>
<span class="t" style="left: 27px; font-size: 3.3px; font-weight: bold; color: rgb(224, 122, 42); letter-spacing: 1.652px; top: 23.71px;">ДІЇ ПРИ ВИЯВЛЕННІ</span>
<span class="t" style="left: 26.5px; font-size: 3.3px; font-weight: bold; color: rgb(224, 122, 42); letter-spacing: 0.073px; top: 28.01px;">ВИБУХОНЕБЕЗПЕЧНИХ ПРЕДМЕТІВ</span>
</div>
<svg class="ph" style="left:43.400px;top:328.600px" width="113.100" height="64" viewBox="0 0 113.100 64"><rect width="113.100" height="64" fill="#fff"></rect>
<g filter="url(#bl1)"><rect width="44.600" height="64" fill="#1f3f9f"></rect><path d="M0 0H44.600V8L0 16Z" fill="#f4c81e"></path><path d="M3 8 44.600 1V9L3 17Z" fill="#e8622a"></path><path d="M0 50 44.600 58V64H0Z" fill="#e8622a"></path><path d="M0 52 17 55V64H0Z" fill="#f4c81e"></path>
<path d="M5 26 9 25 16 36 13 40 8 37Z" fill="#2a2a30"></path><path d="M14 30 26 22M14 34 26 28M15 37 26 35M16 40 26 43M14 42 26 50" stroke="#9fb8e8" stroke-width=".5"></path><g fill="#cfe0f8"><circle cx="26" cy="22" r="1.600"></circle><circle cx="26" cy="28" r="1.600"></circle><circle cx="26" cy="35.500" r="1.800"></circle></g><g fill="#f0d8b0"><circle cx="26" cy="43.500" r="1.700"></circle><circle cx="26" cy="50" r="1.700"></circle></g>
<g stroke="#dfe8fa" stroke-width="1"><path d="M29 22H40M29 28H39M29 35H40M29 37.500H37M29 43.500H40M29 50H39"></path></g><path d="M8 56H13M10.500 53.500V58.500" stroke="#1f3f9f" stroke-width="1.600"></path>
<rect x="44.600" y="42.500" width="68.500" height="10" fill="#8cc63f"></rect><path d="M44.600 47C60 41 80 41 100 46V52H44.600Z" fill="#6fb83a"></path><rect x="44.600" y="57.500" width="68.500" height="6.500" fill="#9a6a5c"></rect><rect x="44.600" y="52" width="68.500" height="5.500" fill="#fff"></rect>
<path d="M68 46 77 47.500 76 52 67 50Z" fill="#2a4a6a"></path>
<path d="M90 30C88 20 96 18 100 20 106 20 108 28 106 34L104 30 94 30Z" fill="#2a1e22"></path><ellipse cx="99" cy="30" rx="5.500" ry="6.500" fill="#f2b9a0"></ellipse><path d="M92 27C94 21 104 21 106 27 102 25 96 25 92 27Z" fill="#2a1e22"></path><path d="M84 52C86 42 94 38 99 38S110 42 112 52Z" fill="#f2c832"></path><path d="M96 36H102V40H96Z" fill="#5a9ad8"></path><path d="M103 34 106 32 109 50 104 52Z" fill="#f0a890"></path>
<path d="M88 12C88 9 92 9 92 12 92 14 90 14 90 17" stroke="#cfcfd4" stroke-width="1.600" fill="none"></path><path d="M108 18C108 16 111 16 111 18 111 19.500 109.500 19.500 109.500 21" stroke="#dcdce0" stroke-width="1.100" fill="none"></path></g>
<g fill="none" stroke-width="1.100"><path d="M48 10.500H50M48 14H50M48 17.500H50" stroke="#f0a8a0"></path><path d="M48 22H50" stroke="#c89ad0"></path><path d="M48 28H50M48 34H50M48 40H50" stroke="#9ad09a"></path></g>
<g stroke="#555" stroke-width=".8"><path d="M51.500 10.500H58M51.500 14H65M51.500 17H84M51.500 18.500H80M51.500 21.500H86M51.500 23H82M51.500 27.500H83M51.500 29H80M51.500 33.500H84M51.500 35H78M51.500 39.500H84M51.500 41H86" opacity=".75"></path><path d="M49 54.800H66M71 54.800H81M88 54.800H101" opacity=".8"></path></g>
<text x="79" y="5.700" font-family="Liberation Sans,sans-serif" font-size="2.800" font-weight="bold" fill="#333" text-anchor="middle">ЯК ДІЯТИ, ЯКЩО ВИ НАТРАПИЛИ</text><text x="79" y="9" font-family="Liberation Sans,sans-serif" font-size="2.800" font-weight="bold" fill="#333" text-anchor="middle">НА ВИБУХОНЕБЕЗПЕЧНИЙ ПРЕДМЕТ?</text></svg>
<div class="a" style="left:42px;top:402.800px;width:116px;height:66.700px;border:1.600px solid #d9624a;background:#fff"></div>
<div class="a" style="left:44.300px;top:404.500px;width:112.200px;height:63.200px;overflow:hidden"><div class="a" style="left: 0px; top: 0px; width: 0px; height: 0px; transform-origin: 0px 0px; transform: scale(0.2115) translate(-251.5px, -254px);">
<!-- ===== SLIDE (page-absolute coords) ===== -->
<div class="a" style="left:251.500px;top:254px;width:530.500px;height:298px;background:linear-gradient(#090909 0,#111 25%,#232323 55%,#333 80%,#3c3c3c 89.500%,#7a4e36 89.600%,#8f6045 100%)"></div>
<svg style="left:251.500px;top:521px;overflow:hidden" width="531" height="31" viewBox="0 0 531 31"><g stroke="#6b432e" stroke-width=".8" opacity=".7"><path d="M6 0 0 14M16 0 4 31M28 0 22 31M490 0 500 31M505 0 522 31M518 0 531 18"></path></g></svg>
<div class="a" style="left:282px;top:255px;width:449.500px;height:297px;background:#fff;border-top:1px solid #b9b9b9;border-right:1px solid #a8a8a8"></div>
<svg style="left:282px;top:257px;overflow:hidden" width="447" height="21.500" viewBox="0 0 447 21.500"><g fill="#ed1d3c">
<path d="M-45.800 0H-17.600L12.600 21.500H-15.600Z"></path><path d="M16 0H44.200L74.400 21.500H46.200Z"></path><path d="M77.500 0H105.700L135.900 21.500H107.700Z"></path><path d="M139.500 0H167.700L197.900 21.500H169.700Z"></path><path d="M201.500 0H229.700L259.900 21.500H231.700Z"></path><path d="M263 0H291.200L321.400 21.500H293.200Z"></path><path d="M325.200 0H353.400L383.600 21.500H355.400Z"></path><path d="M386.500 0H414.700L444.900 21.500H416.700Z"></path></g></svg>
<span class="t" style="left: 374.8px; font-size: 14.8px; font-weight: bold; color: rgb(17, 17, 17); letter-spacing: 2.42px; top: 280.47px;">ІДЕНТИФІКАЦІЯ ЗАГРОЗИ!</span>
<span class="t" style="left: 359px; font-size: 9.8px; color: rgb(51, 51, 51); letter-spacing: 0.874px; top: 300.1px;">ПРОТИПІХОТНІ</span>
<div class="rb" style="left:475px;top:296px;width:59.200px;height:12.800px"></div>
<span class="t rt" style="left: 489px; font-size: 9.8px; letter-spacing: 2.433px; top: 297.9px;">МІНИ</span>
<span class="t" style="left: 548.2px; font-size: 9.8px; color: rgb(51, 51, 51); letter-spacing: 1.414px; top: 300.1px;">ПРОТИТРАНСПОРТНІ</span>
<!-- pin mine -->
<svg style="left:327px;top:300px" width="14" height="34" viewBox="0 0 14 34" filter="url(#bl1)"><path d="M6.800 1V8" stroke="#8a8a7a" stroke-width="1"></path><path d="M2.500 8H11.500L12 16 9.500 18H4.500L2 16Z" fill="#3f9a3c"></path><path d="M4 10.500V15M7 10.500V15.500M10 10.500V15" stroke="#2a7a2c" stroke-width="1"></path><path d="M5 18H9L8.500 30 7 33 5.500 30Z" fill="#b7623f"></path></svg>
<!-- box 1 green mine -->
<div class="bx" style="left:313px;top:335px;width:37.600px;height:28.400px"></div>
<svg style="left:317px;top:341px" width="30" height="18" viewBox="0 0 30 18" filter="url(#bl1)"><path d="M2 5C2 12 6 16.500 15 16.500S28 12 28 5Z" fill="#2e8f48"></path><ellipse cx="15" cy="5" rx="13" ry="3.800" fill="#3fae5c"></ellipse><ellipse cx="15" cy="4.800" rx="6" ry="2" fill="#26352c"></ellipse><path d="M11 13H19" stroke="#d8efdc" stroke-width="1"></path></svg>
<div class="a" style="left:332px;top:363px;width:1px;height:6px;background:#6d6d6d"></div>
<!-- photo sand + MON mine -->
<svg class="ph" style="left:369px;top:314px" width="81" height="40.500" viewBox="0 0 81 40.500"><rect width="81" height="40.500" fill="#b6a78c" filter="url(#nzs)"></rect><g filter="url(#bl1)"><path d="M25 10 30 3 34 10ZM50 12 56 1 58 2 53 13Z" fill="#8a5a3c"></path><path d="M53 12 57 1" stroke="#c9c4b8" stroke-width="1.500"></path><path d="M18 15 22 12 62 13 67 17 65 31 60 34 24 33 19 29Z" fill="#2f9a4a"></path><path d="M18 15 22 12 62 13 67 17 42 19Z" fill="#45b862"></path><path d="M31 24H52" stroke="#1f7a38" stroke-width="1.200"></path><path d="M24 33 23 39M58 34 57 38" stroke="#5a4a2c" stroke-width="1.500"></path></g></svg>
<!-- box 2 butterfly -->
<div class="bx" style="left:467px;top:335px;width:37.400px;height:28.400px"></div>
<svg style="left:473px;top:342px" width="28" height="15" viewBox="0 0 28 15" filter="url(#bl1)"><path d="M1 5C3 1 9 1 12 4L14 2 16 4C19 2 25 1 27 4 26 9 20 11 15 10L13 13H8C3 12 0 9 1 5Z" fill="#4cb860"></path><path d="M12 4 11 12" stroke="#2e8a42" stroke-width="1"></path><path d="M3 6C5 4 8 4 10 6" stroke="#bfe8c6" stroke-width=".8" fill="none"></path></svg>
<div class="a" style="left:485.500px;top:363px;width:1px;height:6px;background:#6d6d6d"></div>
<!-- photo TM mine in grass -->
<svg class="ph" style="left:522px;top:312.300px" width="85.500" height="45" viewBox="0 0 85.500 45"><rect width="85.500" height="45" fill="#6a5a32" filter="url(#nz)"></rect><rect x="50" y="20" width="36" height="25" fill="#5d7a30" opacity=".75" filter="url(#bl2)"></rect><rect x="0" y="0" width="30" height="12" fill="#6b7a35" opacity=".6" filter="url(#bl2)"></rect><g filter="url(#bl1)"><ellipse cx="38" cy="27" rx="26" ry="11" fill="#6b3f26"></ellipse><ellipse cx="40" cy="24" rx="23" ry="9" fill="#9a5c38"></ellipse><ellipse cx="41" cy="22" rx="14" ry="5.500" fill="#7a4428"></ellipse><ellipse cx="42" cy="21" rx="7" ry="2.800" fill="#c9b9a8"></ellipse><path d="M22 30 28 8M27 32 33 12" stroke="#8ab84a" stroke-width="1.400"></path></g></svg>
<!-- photo green tube in leaves -->
<svg class="ph" style="left:623.200px;top:312.300px" width="86" height="45" viewBox="0 0 86 45"><rect width="86" height="45" fill="#3a4a2a" filter="url(#nz)"></rect><g filter="url(#bl2)"><rect x="0" y="0" width="30" height="45" fill="#2f5a2a" opacity=".8"></rect><rect x="58" y="0" width="28" height="45" fill="#cfc9a8" opacity=".75"></rect><rect x="30" y="0" width="30" height="14" fill="#1c2418" opacity=".8"></rect></g><g filter="url(#bl1)"><path d="M16 19 64 15 66 23 17 26Z" fill="#1f8a5e"></path><path d="M44 17 64 15 66 21 45 22Z" fill="#7fd6b0"></path></g></svg>
<div class="a" style="left:563.500px;top:357.300px;width:1px;height:10px;background:#6d6d6d"></div>
<div class="a" style="left:665.800px;top:357.300px;width:1px;height:10px;background:#6d6d6d"></div>
<!-- row 2 -->
<svg class="ph" style="left:301.600px;top:368.500px" width="79.700" height="40.500" viewBox="0 0 79.700 40.500"><rect width="79.700" height="40.500" fill="#5a5a48" filter="url(#nz)"></rect><g filter="url(#bl2)"><rect x="0" y="16" width="22" height="20" fill="#3f7a3a" opacity=".7"></rect><rect x="52" y="24" width="26" height="16" fill="#4a7a3a" opacity=".6"></rect><rect x="0" y="0" width="80" height="9" fill="#4a3a30" opacity=".6"></rect></g><g filter="url(#bl1)"><ellipse cx="35" cy="23" rx="20" ry="9.500" fill="#2c8a58"></ellipse><ellipse cx="35" cy="21.500" rx="17" ry="7.500" fill="#3a9a78"></ellipse><ellipse cx="35" cy="21" rx="11" ry="4.800" fill="#3f86b0"></ellipse><path d="M27 18 43 24M43 18 27 24" stroke="#1c3a4a" stroke-width="2.200"></path></g></svg>
<svg style="left:394.700px;top:360px" width="33" height="48.500" viewBox="0 0 33 48.500" filter="url(#bl1)"><path d="M8.500 1V13" stroke="#b8b8b0" stroke-width="2.200"></path><path d="M6.500 3H10.500M6.500 7H10.500" stroke="#777" stroke-width="1"></path><path d="M1.500 16V42C1.500 49 31.500 49 31.500 42V16Z" fill="#a8962a"></path><ellipse cx="16.500" cy="16" rx="15" ry="4.800" fill="#c4b44a"></ellipse><path d="M1.500 20C1.500 25 31.500 25 31.500 20" fill="none" stroke="#8a7a1e" stroke-width="1"></path><path d="M14 14 20 12" stroke="#7a6a1c" stroke-width="1.500"></path></svg>
<svg class="ph" style="left:438.500px;top:368.500px" width="79.300" height="40.500" viewBox="0 0 79.300 40.500"><rect width="79.300" height="40.500" fill="#5a5240" filter="url(#nz)"></rect><g filter="url(#bl2)"><rect x="58" y="0" width="22" height="14" fill="#4f8a3a" opacity=".8"></rect><rect x="60" y="24" width="20" height="12" fill="#5a8a4a" opacity=".6"></rect></g><g filter="url(#bl1)"><path d="M16 28 30 20 44 21 54 12 64 14 62 24 44 32 26 36 18 34Z" fill="#b9a68a"></path><path d="M44 21 44 32" stroke="#8a7a60" stroke-width="1"></path><ellipse cx="27" cy="18" rx="3.500" ry="2.200" fill="#f3f0e8"></ellipse></g></svg>
<div class="bx" style="left:533.300px;top:367.400px;width:60.100px;height:41px"></div>
<svg style="left:536px;top:370px" width="56" height="36" viewBox="0 0 56 36" filter="url(#bl1)"><path d="M2 3C8 1 12 3 11 7" stroke="#1a1a1a" stroke-width="1.600" fill="none"></path><path d="M4 17C4 28 14 34 28 34S52 28 52 17Z" fill="#7a7a2a"></path><ellipse cx="28" cy="17" rx="24" ry="9" fill="#9a9a3e"></ellipse><ellipse cx="28" cy="13" rx="13" ry="5.500" fill="#5e5e22"></ellipse><ellipse cx="28" cy="11" rx="9" ry="3.800" fill="#86863a"></ellipse><ellipse cx="28" cy="9" rx="3" ry="1.600" fill="#c4c07a"></ellipse></svg>
<div class="bx" style="left:636.200px;top:367.400px;width:59.600px;height:41px"></div>
<svg style="left:640px;top:370px" width="54" height="36" viewBox="0 0 54 36" filter="url(#bl1)"><path d="M5 4 9 1 50 26 46 31Z" fill="#2f7a62"></path><path d="M8 3 49 28" stroke="#9fd8c4" stroke-width="1.500"></path><path d="M3 5 9 0" stroke="#1c3a30" stroke-width="2.200"></path></svg>
<span class="t cr" style="left: 411px; font-size: 9.4px; letter-spacing: 0.59px; top: 412.44px;">УВАГА! Всі міни є вкрай небезпечні!</span>
<span class="t cr" style="left: 389.7px; font-size: 9.4px; letter-spacing: 0.643px; top: 420.34px;">Термін бойової роботи мін НЕОБМЕЖЕНИЙ!</span>
<span class="t" style="left: 384.5px; font-size: 11.6px; font-weight: bold; color: rgb(17, 17, 17); letter-spacing: 1.723px; top: 432.38px;">Вибухонебезпечні залишки війни</span>
<div class="rb" style="left:302px;top:447px;width:220px;height:12.400px"></div>
<span class="t rt" style="left: 309.8px; font-size: 9.6px; letter-spacing: 1.261px; top: 448.67px;">БОЄПРИПАСИ, ЩО НЕ ВИБУХНУЛИ</span>
<div class="rb" style="left:535px;top:447px;width:173px;height:12.400px"></div>
<span class="t rt" style="left: 545.3px; font-size: 9.6px; letter-spacing: 1.702px; top: 448.67px;">ЗАЛИШЕНІ БОЄПРИПАСИ</span>
<!-- row 3 photos -->
<svg class="ph" style="left:301.200px;top:463.800px" width="67.200" height="46.200" viewBox="0 0 67.200 46.200"><rect width="67.200" height="46.200" fill="#8c7d70" filter="url(#nzs)"></rect><g filter="url(#bl1)"><path d="M0 0H46L40 9 0 13Z" fill="#5a8a3c"></path><path d="M0 20 8 18 22 40 16 46 0 46Z" fill="#2a2a30"></path><path d="M2 24 18 42M6 22 22 40" stroke="#e8e8ec" stroke-width="1.800"></path><path d="M56 14 66 16 66 34 60 32Z" fill="#33333a"></path><path d="M58 16 62 32" stroke="#d8d8dc" stroke-width="1.200"></path><path d="M14 14 26 18M24 22 34 26M34 10 46 16M40 22 50 24M28 32 40 30" stroke="#4a3a30" stroke-width="3"></path></g></svg>
<svg class="ph" style="left:374.900px;top:463.800px" width="63" height="46.200" viewBox="0 0 63 46.200"><rect width="63" height="46.200" fill="#ad877e" filter="url(#nzs)"></rect><g filter="url(#bl1)"><rect x="0" y="0" width="63" height="6" fill="#5e4e4c"></rect><path d="M22 28 34 24 44 30 40 36 34 28Z" fill="#2a2a34"></path><path d="M30 24 40 30" stroke="#d0d0d8" stroke-width="1.200"></path></g></svg>
<svg class="ph" style="left:443.900px;top:463.800px" width="78.100" height="46.200" viewBox="0 0 78.100 46.200"><rect width="78.100" height="46.200" fill="#7d726a" filter="url(#nzs)"></rect><g filter="url(#bl1)"><rect x="0" y="0" width="78" height="8" fill="#5c524a" opacity=".8"></rect><rect x="0" y="32" width="78" height="15" fill="#8f7a6e" opacity=".7"></rect><path d="M56 0H66V9H56Z" fill="#5a4a3a"></path><path d="M32 12C36 6 52 5 64 12L60 22 48 24 38 22Z" fill="#8a8e96"></path><path d="M40 10 44 22M48 8 50 24M56 9 56 23" stroke="#5a5e66" stroke-width="1.400"></path><path d="M38 22 48 24 46 38 36 37Z" fill="#6a6a70"></path><path d="M30 40 52 42" stroke="#a8562a" stroke-width="2"></path></g></svg>
<svg class="ph" style="left:534.300px;top:463.800px" width="82.600" height="46.200" viewBox="0 0 82.600 46.200"><rect width="82.600" height="46.200" fill="#7a7a3a" filter="url(#nz)"></rect><g filter="url(#bl2)"><rect x="0" y="0" width="83" height="10" fill="#c9d0b0" opacity=".8"></rect><rect x="0" y="30" width="83" height="16" fill="#5a5226" opacity=".7"></rect><rect x="50" y="8" width="33" height="12" fill="#6a9a3a" opacity=".7"></rect></g><g filter="url(#bl1)"><path d="M24 4 46 2 50 12 40 26 26 24Z" fill="#8a8660"></path><path d="M40 18 78 20 78 33 40 33Z" fill="#b8ad78"></path><path d="M40 18 78 20 78 23 40 21Z" fill="#d0c690"></path><path d="M10 2 20 18M16 0 22 14" stroke="#4a3a24" stroke-width="1.200"></path></g></svg>
<svg class="ph" style="left:623.400px;top:463.800px" width="85.400" height="46.200" viewBox="0 0 85.400 46.200"><rect width="85.400" height="46.200" fill="#4a524a" filter="url(#nz)"></rect><g filter="url(#bl2)"><rect x="0" y="0" width="86" height="16" fill="#6a9a5a" opacity=".85"></rect><rect x="60" y="0" width="26" height="14" fill="#cfe0c0" opacity=".7"></rect></g><g filter="url(#bl1)"><rect x="2" y="19" width="42" height="14" fill="#7a7e6a"></rect><path d="M2 23H44M2 27H44M10 19V33M20 19V33M30 19V33" stroke="#4a4e40" stroke-width=".8"></path><path d="M44 22 56 16 70 22 84 30 84 44 50 44 38 36Z" fill="#4a5460"></path><path d="M56 30H66M68 34H78" stroke="#a84a3a" stroke-width="2"></path><path d="M46 24 54 40" stroke="#9aa4b0" stroke-width="2"></path></g></svg>
<span class="t cr" style="left: 460px; font-size: 9.2px; letter-spacing: 2.109px; top: 515.21px;">ЗАБОРОНЕНО!</span>
<span class="t cr" style="left: 319.4px; font-size: 7.8px; letter-spacing: 1.481px; top: 526.2px;">Займатися збором металобрухту на територіях, яких торкнулася війна</span>
<div class="rb" style="left:458.200px;top:540.200px;width:95.700px;height:11.500px"></div>
<span class="t rt" style="left: 465.3px; font-size: 9.4px; letter-spacing: 2.193px; top: 540.54px;">ПІДРИВНИКИ</span>
</div></div>
<svg class="ph" style="left:43.600px;top:479.500px" width="112.900" height="63.100" viewBox="0 0 112.900 63.100"><rect width="112.900" height="63.100" fill="#8a8a86"></rect>
<g filter="url(#bl1)"><rect x="0" y="0" width="32.300" height="32" fill="#d3e2f2"></rect><rect x="0" y="22" width="32.300" height="10" fill="#5a4a3c"></rect><ellipse cx="15" cy="22" rx="7" ry="6" fill="#e89a30"></ellipse><ellipse cx="15" cy="20" rx="3.500" ry="3.500" fill="#f8d870"></ellipse><path d="M5 30C8 26 22 26 25 30Z" fill="#2a2420"></path>
<rect x="32.300" y="0" width="80.600" height="34" fill="#6fa6dc"></rect><rect x="78" y="0" width="35" height="26" fill="#8a8680"></rect><path d="M50 0H76C78 10 70 18 60 20 52 16 50 8 50 0Z" fill="#2e2826"></path><path d="M84 0H112V14C100 18 90 10 84 0Z" fill="#5a5654"></path>
<path d="M52 16C60 12 74 14 80 22 72 26 58 26 52 22Z" fill="#f07a28"></path><path d="M32.300 18 38 12 48 16 50 26 32.300 28Z" fill="#e8602a"></path><circle cx="37" cy="12" r="2.200" fill="#3a2a24"></circle>
<rect x="32.300" y="26" width="80.600" height="8" fill="#6a625a"></rect><rect x="32.300" y="28" width="18" height="6" fill="#2a2422"></rect><rect x="90" y="20" width="22" height="7" fill="#8a8a78"></rect>
<rect x="0" y="32.500" width="53" height="30.600" fill="#2f6fd2"></rect><rect x="0" y="44" width="14" height="16" fill="#5a8ad8" opacity=".6"></rect><path d="M16 52C22 48 30 48 34 56 28 60 20 58 16 52Z" fill="#4a3028"></path><path d="M28 52C32 44 42 42 48 48 54 52 52 60 46 62H30C26 60 26 56 28 52Z" fill="#f08a28"></path><ellipse cx="44" cy="57" rx="7" ry="5" fill="#fbd060"></ellipse><path d="M30 50 42 44" stroke="#5a3828" stroke-width="2.500"></path><rect x="0" y="60.500" width="53" height="2.600" fill="#5a5a5a"></rect><path d="M13 60V46" stroke="#4a5a7a" stroke-width=".6"></path>
<rect x="53" y="34.500" width="59.900" height="28.600" fill="#d6cab8"></rect><rect x="53" y="34.500" width="27" height="8" fill="#a8a49a"></rect><rect x="80" y="34.500" width="33" height="12" fill="#e6dccc"></rect>
<g fill="#34342a"><path d="M58 60C57 54 59 50 60.500 50S64 54 63 60Z"></path><path d="M64 60C63 54 64.500 50 66 50S69 54 68 60Z"></path><path d="M69.500 61C68 52 70 44 72 42.500 74 44 76 52 74.500 61Z"></path><path d="M76 61C74.500 52 77 43 79.500 41.500 82 43 84 52 82.500 61Z"></path><path d="M84 61C82.500 52 85 43 87.500 41.500 90 43 92 52 90.500 61Z"></path><path d="M91.500 61C90 50 92 39 95 36 98 39 100 50 98.500 61Z"></path><path d="M100.500 61C99 50 101 40 104 37.500 107 40 109 50 107.500 61Z"></path></g><g fill="#4a3a2a"><circle cx="60" cy="38" r="1.200"></circle><circle cx="69" cy="37" r="1"></circle></g></g></svg>
<svg class="ph" style="left:43.600px;top:554.500px" width="112.900" height="24.500" viewBox="0 0 112.900 24.500"><defs><linearGradient id="sk" x1="0" y1="0" x2="0" y2="1"><stop offset="0" stop-color="#2f8fe0"></stop><stop offset=".45" stop-color="#7cc0ee"></stop><stop offset=".8" stop-color="#e6f2fa"></stop><stop offset="1" stop-color="#fff"></stop></linearGradient></defs><rect width="112.900" height="24.500" fill="url(#sk)"></rect><g filter="url(#bl2)"><ellipse cx="22" cy="11" rx="20" ry="3.500" fill="#fff" opacity=".7"></ellipse><ellipse cx="64" cy="9" rx="24" ry="3" fill="#fff" opacity=".6"></ellipse><path d="M86 0H112.900V13C104 14 92 8 86 0Z" fill="#7ac850"></path><circle cx="104" cy="7" r="3" fill="#e6f6c0"></circle></g><text x="56" y="24.300" font-family="Liberation Sans,sans-serif" font-size="3" font-weight="bold" fill="#e08a3a" text-anchor="middle" textLength="68">ПАМ'ЯТАЙТЕ ПРО ПРАВИЛА БЕЗПЕКИ</text><circle cx="101.500" cy="22.500" r=".9" fill="#e8a040"></circle></svg>
<!-- notes + status -->
<div class="a" style="left:178px;top:560px;width:676px;height:1px;background:#cfcfcf"></div>
<span class="t" style="left: 184.5px; font-size: 8.8px; color: rgb(85, 85, 85); letter-spacing: -0.566px; top: 565.45px;">Нотатки до слайда</span>
<div class="a" style="left:24px;top:579px;width:839px;height:12px;background:#f4f2f1"></div>
<span class="t" style="left: 28.6px; font-size: 6.25px; color: rgb(96, 94, 92); letter-spacing: -0.447px; top: 582.21px;">Слайд 31 з 38</span>
<span class="t" style="left: 82px; font-size: 6.25px; color: rgb(96, 94, 92); letter-spacing: -0.359px; top: 582.21px;">українська</span>
<svg style="left:583.500px;top:580.500px" width="9" height="9" viewBox="0 0 9 9"><path d="M0 4.500H9M0 6.500H9M0 8.500H9M2.500 3 4.500 1 6.500 3" fill="none" stroke="#605e5c" stroke-width=".8"></path></svg>
<span class="t" style="left: 594.2px; font-size: 6.25px; color: rgb(96, 94, 92); letter-spacing: -0.58px; top: 582.21px;">Нотатки</span>
<svg style="left:625px;top:580.500px" width="9" height="9" viewBox="0 0 9 9"><path d="M.5.500H8.500V6H4L2 8V6H.5Z" fill="none" stroke="#605e5c" stroke-width=".8"></path></svg>
<span class="t" style="left: 634.6px; font-size: 6.25px; color: rgb(96, 94, 92); letter-spacing: -0.405px; top: 582.21px;">Примітки</span>
<div class="a" style="left:669.200px;top:579px;width:20.600px;height:12px;background:#d2d0ce"></div>
<svg style="left:674.500px;top:581.500px" width="90" height="8" viewBox="0 0 90 8" fill="none" stroke="#484644" stroke-width=".9"><rect x=".5" y=".5" width="9" height="6.500"></rect><path d="M3.500.500V7M5 2.500H8M5 4.500H8"></path><rect x="22.500" y=".5" width="3" height="2.500"></rect><rect x="28" y=".5" width="3" height="2.500"></rect><rect x="22.500" y="4.500" width="3" height="2.500"></rect><rect x="28" y="4.500" width="3" height="2.500"></rect><path d="M45 1V7H53V1M49 1V7M45 1C46.500.300 47.500.300 49 1 50.500.300 51.500.300 53 1"></path><rect x="67" y=".5" width="7.500" height="4"></rect><path d="M70.700 4.500V7M68.500 7.200H73"></path></svg>
<div class="a" style="left:766px;top:585px;width:53.500px;height:1px;background:#a19f9d"></div>
<div class="a" style="left:790px;top:581.500px;width:2.200px;height:7.500px;background:#605e5c"></div>
<span class="t" style="left: 759px; font-size: 8px; color: rgb(138, 136, 134); top: 581.03px;">-</span>
<span class="t" style="left: 823px; font-size: 8px; color: rgb(138, 136, 134); top: 581.23px;">+</span>
<span class="t" style="left: 834.3px; font-size: 6.25px; color: rgb(96, 94, 92); letter-spacing: -1.058px; top: 582.21px;">92%</span>
<svg style="left:852.500px;top:580.500px" width="9" height="9" viewBox="0 0 9 9" fill="none" stroke="#484644" stroke-width=".9"><rect x="2.500" y="2.500" width="4" height="4"></rect><path d="M4.500 0V2M4.500 7V9M0 4.500H2M7 4.500H9"></path></svg>
<!-- edit-area vertical scrollbar -->
<div class="a" style="left:854px;top:247px;width:9px;height:313px;background:#e3e3e6"></div>
<div class="a" style="left:854px;top:248px;width:9px;height:8px;background:#fafafa"></div>
<svg style="left:856px;top:250.500px" width="5" height="3" viewBox="0 0 5 3"><path d="M0 3H5L2.500 0Z" fill="#555"></path></svg>
<div class="a" style="left:854px;top:465px;width:9px;height:9px;background:#fdfdfd"></div>
<div class="a" style="left:854px;top:522.500px;width:9px;height:8px;background:#fafafa"></div>
<svg style="left:856px;top:525.500px" width="5" height="3" viewBox="0 0 5 3"><path d="M0 0H5L2.500 3Z" fill="#555"></path></svg>
<svg style="left:856px;top:533.500px" width="5" height="15" viewBox="0 0 5 15" fill="#666"><path d="M0 2.500H5L2.500 0ZM0 5H5L2.500 2.500ZM0 10H5L2.500 12.500ZM0 12.500H5L2.500 15Z"></path></svg>
<!-- ===== SLIDE (page-absolute coords) ===== -->
<div class="a" style="left:251.500px;top:254px;width:530.500px;height:298px;background:linear-gradient(#090909 0,#111 25%,#232323 55%,#333 80%,#3c3c3c 89.500%,#7a4e36 89.600%,#8f6045 100%)"></div>
<svg style="left:251.500px;top:521px;overflow:hidden" width="531" height="31" viewBox="0 0 531 31"><g stroke="#6b432e" stroke-width=".8" opacity=".7"><path d="M6 0 0 14M16 0 4 31M28 0 22 31M490 0 500 31M505 0 522 31M518 0 531 18"></path></g></svg>
<div class="a" style="left:282px;top:255px;width:449.500px;height:297px;background:#fff;border-top:1px solid #b9b9b9;border-right:1px solid #a8a8a8"></div>
<svg style="left:282px;top:257px;overflow:hidden" width="447" height="21.500" viewBox="0 0 447 21.500"><g fill="#ed1d3c">
<path d="M-45.800 0H-17.600L12.600 21.500H-15.600Z"></path><path d="M16 0H44.200L74.400 21.500H46.200Z"></path><path d="M77.500 0H105.700L135.900 21.500H107.700Z"></path><path d="M139.500 0H167.700L197.900 21.500H169.700Z"></path><path d="M201.500 0H229.700L259.900 21.500H231.700Z"></path><path d="M263 0H291.200L321.400 21.500H293.200Z"></path><path d="M325.200 0H353.400L383.600 21.500H355.400Z"></path><path d="M386.500 0H414.700L444.900 21.500H416.700Z"></path></g></svg>
<span class="t" style="left: 374.2px; font-size: 14.8px; font-weight: bold; color: rgb(17, 17, 17); display: inline-block; transform-origin: 0px 50%; transform: scaleX(1.2694); top: 280.47px;">ІДЕНТИФІКАЦІЯ ЗАГРОЗИ!</span>
<span class="t" style="left: 359px; font-size: 9.8px; color: rgb(51, 51, 51); display: inline-block; transform-origin: 0px 50%; transform: scaleX(1.1309); top: 300.1px;">ПРОТИПІХОТНІ</span>
<div class="rb" style="left:475px;top:296px;width:59.200px;height:12.800px"></div>
<span class="t rt" style="left: 489px; font-size: 9.8px; display: inline-block; transform-origin: 0px 50%; transform: scaleX(1.292); top: 297.9px;">МІНИ</span>
<span class="t" style="left: 548.2px; font-size: 9.8px; color: rgb(51, 51, 51); display: inline-block; transform-origin: 0px 50%; transform: scaleX(1.2057); top: 300.1px;">ПРОТИТРАНСПОРТНІ</span>
<!-- pin mine -->
<svg style="left:327px;top:300px" width="14" height="34" viewBox="0 0 14 34" filter="url(#bl1)"><path d="M6.800 1V8" stroke="#8a8a7a" stroke-width="1"></path><path d="M2.500 8H11.500L12 16 9.500 18H4.500L2 16Z" fill="#3f9a3c"></path><path d="M4 10.500V15M7 10.500V15.500M10 10.500V15" stroke="#2a7a2c" stroke-width="1"></path><path d="M5 18H9L8.500 30 7 33 5.500 30Z" fill="#b7623f"></path></svg>
<!-- box 1 green mine -->
<div class="bx" style="left:313px;top:335px;width:37.600px;height:28.400px"></div>
<svg style="left:317px;top:341px" width="30" height="18" viewBox="0 0 30 18" filter="url(#bl1)"><path d="M2 5C2 12 6 16.500 15 16.500S28 12 28 5Z" fill="#2e8f48"></path><ellipse cx="15" cy="5" rx="13" ry="3.800" fill="#3fae5c"></ellipse><ellipse cx="15" cy="4.800" rx="6" ry="2" fill="#26352c"></ellipse><path d="M11 13H19" stroke="#d8efdc" stroke-width="1"></path></svg>
<div class="a" style="left:332px;top:363px;width:1px;height:6px;background:#6d6d6d"></div>
<!-- photo sand + MON mine -->
<svg class="ph" style="left:369px;top:314px" width="81" height="40.500" viewBox="0 0 81 40.500"><rect width="81" height="40.500" fill="#b6a78c" filter="url(#nzs)"></rect><g filter="url(#bl1)"><path d="M25 10 30 3 34 10ZM50 12 56 1 58 2 53 13Z" fill="#8a5a3c"></path><path d="M53 12 57 1" stroke="#c9c4b8" stroke-width="1.500"></path><path d="M18 15 22 12 62 13 67 17 65 31 60 34 24 33 19 29Z" fill="#2f9a4a"></path><path d="M18 15 22 12 62 13 67 17 42 19Z" fill="#45b862"></path><path d="M31 24H52" stroke="#1f7a38" stroke-width="1.200"></path><path d="M24 33 23 39M58 34 57 38" stroke="#5a4a2c" stroke-width="1.500"></path></g></svg>
<!-- box 2 butterfly -->
<div class="bx" style="left:467px;top:335px;width:37.400px;height:28.400px"></div>
<svg style="left:473px;top:342px" width="28" height="15" viewBox="0 0 28 15" filter="url(#bl1)"><path d="M1 5C3 1 9 1 12 4L14 2 16 4C19 2 25 1 27 4 26 9 20 11 15 10L13 13H8C3 12 0 9 1 5Z" fill="#4cb860"></path><path d="M12 4 11 12" stroke="#2e8a42" stroke-width="1"></path><path d="M3 6C5 4 8 4 10 6" stroke="#bfe8c6" stroke-width=".8" fill="none"></path></svg>
<div class="a" style="left:485.500px;top:363px;width:1px;height:6px;background:#6d6d6d"></div>
<!-- photo TM mine in grass -->
<svg class="ph" style="left:522px;top:312.300px" width="85.500" height="45" viewBox="0 0 85.500 45"><rect width="85.500" height="45" fill="#6a5a32" filter="url(#nz)"></rect><rect x="50" y="20" width="36" height="25" fill="#5d7a30" opacity=".75" filter="url(#bl2)"></rect><rect x="0" y="0" width="30" height="12" fill="#6b7a35" opacity=".6" filter="url(#bl2)"></rect><g filter="url(#bl1)"><ellipse cx="38" cy="27" rx="26" ry="11" fill="#6b3f26"></ellipse><ellipse cx="40" cy="24" rx="23" ry="9" fill="#9a5c38"></ellipse><ellipse cx="41" cy="22" rx="14" ry="5.500" fill="#7a4428"></ellipse><ellipse cx="42" cy="21" rx="7" ry="2.800" fill="#c9b9a8"></ellipse><path d="M22 30 28 8M27 32 33 12" stroke="#8ab84a" stroke-width="1.400"></path></g></svg>
<!-- photo green tube in leaves -->
<svg class="ph" style="left:623.200px;top:312.300px" width="86" height="45" viewBox="0 0 86 45"><rect width="86" height="45" fill="#3a4a2a" filter="url(#nz)"></rect><g filter="url(#bl2)"><rect x="0" y="0" width="30" height="45" fill="#2f5a2a" opacity=".8"></rect><rect x="58" y="0" width="28" height="45" fill="#cfc9a8" opacity=".75"></rect><rect x="30" y="0" width="30" height="14" fill="#1c2418" opacity=".8"></rect></g><g filter="url(#bl1)"><path d="M16 19 64 15 66 23 17 26Z" fill="#1f8a5e"></path><path d="M44 17 64 15 66 21 45 22Z" fill="#7fd6b0"></path></g></svg>
<div class="a" style="left:563.500px;top:357.300px;width:1px;height:10px;background:#6d6d6d"></div>
<div class="a" style="left:665.800px;top:357.300px;width:1px;height:10px;background:#6d6d6d"></div>
<!-- row 2 -->
<svg class="ph" style="left:301.600px;top:368.500px" width="79.700" height="40.500" viewBox="0 0 79.700 40.500"><rect width="79.700" height="40.500" fill="#5a5a48" filter="url(#nz)"></rect><g filter="url(#bl2)"><rect x="0" y="16" width="22" height="20" fill="#3f7a3a" opacity=".7"></rect><rect x="52" y="24" width="26" height="16" fill="#4a7a3a" opacity=".6"></rect><rect x="0" y="0" width="80" height="9" fill="#4a3a30" opacity=".6"></rect></g><g filter="url(#bl1)"><ellipse cx="35" cy="23" rx="20" ry="9.500" fill="#2c8a58"></ellipse><ellipse cx="35" cy="21.500" rx="17" ry="7.500" fill="#3a9a78"></ellipse><ellipse cx="35" cy="21" rx="11" ry="4.800" fill="#3f86b0"></ellipse><path d="M27 18 43 24M43 18 27 24" stroke="#1c3a4a" stroke-width="2.200"></path></g></svg>
<svg style="left:394.700px;top:360px" width="33" height="48.500" viewBox="0 0 33 48.500" filter="url(#bl1)"><path d="M8.500 1V13" stroke="#b8b8b0" stroke-width="2.200"></path><path d="M6.500 3H10.500M6.500 7H10.500" stroke="#777" stroke-width="1"></path><path d="M1.500 16V42C1.500 49 31.500 49 31.500 42V16Z" fill="#a8962a"></path><ellipse cx="16.500" cy="16" rx="15" ry="4.800" fill="#c4b44a"></ellipse><path d="M1.500 20C1.500 25 31.500 25 31.500 20" fill="none" stroke="#8a7a1e" stroke-width="1"></path><path d="M14 14 20 12" stroke="#7a6a1c" stroke-width="1.500"></path></svg>
<svg class="ph" style="left:438.500px;top:368.500px" width="79.300" height="40.500" viewBox="0 0 79.300 40.500"><rect width="79.300" height="40.500" fill="#5a5240" filter="url(#nz)"></rect><g filter="url(#bl2)"><rect x="58" y="0" width="22" height="14" fill="#4f8a3a" opacity=".8"></rect><rect x="60" y="24" width="20" height="12" fill="#5a8a4a" opacity=".6"></rect></g><g filter="url(#bl1)"><path d="M16 28 30 20 44 21 54 12 64 14 62 24 44 32 26 36 18 34Z" fill="#b9a68a"></path><path d="M44 21 44 32" stroke="#8a7a60" stroke-width="1"></path><ellipse cx="27" cy="18" rx="3.500" ry="2.200" fill="#f3f0e8"></ellipse></g></svg>
<div class="bx" style="left:533.300px;top:367.400px;width:60.100px;height:41px"></div>
<svg style="left:536px;top:370px" width="56" height="36" viewBox="0 0 56 36" filter="url(#bl1)"><path d="M2 3C8 1 12 3 11 7" stroke="#1a1a1a" stroke-width="1.600" fill="none"></path><path d="M4 17C4 28 14 34 28 34S52 28 52 17Z" fill="#7a7a2a"></path><ellipse cx="28" cy="17" rx="24" ry="9" fill="#9a9a3e"></ellipse><ellipse cx="28" cy="13" rx="13" ry="5.500" fill="#5e5e22"></ellipse><ellipse cx="28" cy="11" rx="9" ry="3.800" fill="#86863a"></ellipse><ellipse cx="28" cy="9" rx="3" ry="1.600" fill="#c4c07a"></ellipse></svg>
<div class="bx" style="left:636.200px;top:367.400px;width:59.600px;height:41px"></div>
<svg style="left:640px;top:370px" width="54" height="36" viewBox="0 0 54 36" filter="url(#bl1)"><path d="M5 4 9 1 50 26 46 31Z" fill="#2f7a62"></path><path d="M8 3 49 28" stroke="#9fd8c4" stroke-width="1.500"></path><path d="M3 5 9 0" stroke="#1c3a30" stroke-width="2.200"></path></svg>
<span class="t cr" style="left: 411px; font-size: 9.4px; display: inline-block; transform-origin: 0px 50%; transform: scaleX(1.1192); top: 412.94px;">УВАГА! Всі міни є вкрай небезпечні!</span>
<span class="t cr" style="left: 389.7px; font-size: 9.4px; display: inline-block; transform-origin: 0px 50%; transform: scaleX(1.1153); top: 420.74px;">Термін бойової роботи мін НЕОБМЕЖЕНИЙ!</span>
<span class="t" style="left: 384.5px; font-size: 11.6px; font-weight: bold; color: rgb(17, 17, 17); display: inline-block; transform-origin: 0px 50%; transform: scaleX(1.2598); top: 432.38px;">Вибухонебезпечні залишки війни</span>
<div class="rb" style="left:302px;top:447px;width:220px;height:12.400px"></div>
<span class="t rt" style="left: 309.8px; font-size: 9.6px; display: inline-block; transform-origin: 0px 50%; transform: scaleX(1.194); top: 448.67px;">БОЄПРИПАСИ, ЩО НЕ ВИБУХНУЛИ</span>
<div class="rb" style="left:535px;top:447px;width:173px;height:12.400px"></div>
<span class="t rt" style="left: 545.3px; font-size: 9.6px; display: inline-block; transform-origin: 0px 50%; transform: scaleX(1.2475); top: 448.67px;">ЗАЛИШЕНІ БОЄПРИПАСИ</span>
<!-- row 3 photos -->
<svg class="ph" style="left:301.200px;top:463.800px" width="67.200" height="46.200" viewBox="0 0 67.200 46.200"><rect width="67.200" height="46.200" fill="#8c7d70" filter="url(#nzs)"></rect><g filter="url(#bl1)"><path d="M0 0H46L40 9 0 13Z" fill="#5a8a3c"></path><path d="M0 20 8 18 22 40 16 46 0 46Z" fill="#2a2a30"></path><path d="M2 24 18 42M6 22 22 40" stroke="#e8e8ec" stroke-width="1.800"></path><path d="M56 14 66 16 66 34 60 32Z" fill="#33333a"></path><path d="M58 16 62 32" stroke="#d8d8dc" stroke-width="1.200"></path><path d="M14 14 26 18M24 22 34 26M34 10 46 16M40 22 50 24M28 32 40 30" stroke="#4a3a30" stroke-width="3"></path></g></svg>
<svg class="ph" style="left:374.900px;top:463.800px" width="63" height="46.200" viewBox="0 0 63 46.200"><rect width="63" height="46.200" fill="#ad877e" filter="url(#nzs)"></rect><g filter="url(#bl1)"><rect x="0" y="0" width="63" height="6" fill="#5e4e4c"></rect><path d="M22 28 34 24 44 30 40 36 34 28Z" fill="#2a2a34"></path><path d="M30 24 40 30" stroke="#d0d0d8" stroke-width="1.200"></path></g></svg>
<svg class="ph" style="left:443.900px;top:463.800px" width="78.100" height="46.200" viewBox="0 0 78.100 46.200"><rect width="78.100" height="46.200" fill="#7d726a" filter="url(#nzs)"></rect><g filter="url(#bl1)"><rect x="0" y="0" width="78" height="8" fill="#5c524a" opacity=".8"></rect><rect x="0" y="32" width="78" height="15" fill="#8f7a6e" opacity=".7"></rect><path d="M56 0H66V9H56Z" fill="#5a4a3a"></path><path d="M32 12C36 6 52 5 64 12L60 22 48 24 38 22Z" fill="#8a8e96"></path><path d="M40 10 44 22M48 8 50 24M56 9 56 23" stroke="#5a5e66" stroke-width="1.400"></path><path d="M38 22 48 24 46 38 36 37Z" fill="#6a6a70"></path><path d="M30 40 52 42" stroke="#a8562a" stroke-width="2"></path></g></svg>
<svg class="ph" style="left:534.300px;top:463.800px" width="82.600" height="46.200" viewBox="0 0 82.600 46.200"><rect width="82.600" height="46.200" fill="#7a7a3a" filter="url(#nz)"></rect><g filter="url(#bl2)"><rect x="0" y="0" width="83" height="10" fill="#c9d0b0" opacity=".8"></rect><rect x="0" y="30" width="83" height="16" fill="#5a5226" opacity=".7"></rect><rect x="50" y="8" width="33" height="12" fill="#6a9a3a" opacity=".7"></rect></g><g filter="url(#bl1)"><path d="M24 4 46 2 50 12 40 26 26 24Z" fill="#8a8660"></path><path d="M40 18 78 20 78 33 40 33Z" fill="#b8ad78"></path><path d="M40 18 78 20 78 23 40 21Z" fill="#d0c690"></path><path d="M10 2 20 18M16 0 22 14" stroke="#4a3a24" stroke-width="1.200"></path></g></svg>
<svg class="ph" style="left:623.400px;top:463.800px" width="85.400" height="46.200" viewBox="0 0 85.400 46.200"><rect width="85.400" height="46.200" fill="#4a524a" filter="url(#nz)"></rect><g filter="url(#bl2)"><rect x="0" y="0" width="86" height="16" fill="#6a9a5a" opacity=".85"></rect><rect x="60" y="0" width="26" height="14" fill="#cfe0c0" opacity=".7"></rect></g><g filter="url(#bl1)"><rect x="2" y="19" width="42" height="14" fill="#7a7e6a"></rect><path d="M2 23H44M2 27H44M10 19V33M20 19V33M30 19V33" stroke="#4a4e40" stroke-width=".8"></path><path d="M44 22 56 16 70 22 84 30 84 44 50 44 38 36Z" fill="#4a5460"></path><path d="M56 30H66M68 34H78" stroke="#a84a3a" stroke-width="2"></path><path d="M46 24 54 40" stroke="#9aa4b0" stroke-width="2"></path></g></svg>
<span class="t cr" style="left: 460px; font-size: 9.2px; display: inline-block; transform-origin: 0px 50%; transform: scaleX(1.3061); top: 515.81px;">ЗАБОРОНЕНО!</span>
<span class="t cr" style="left: 319.4px; font-size: 7.8px; display: inline-block; transform-origin: 0px 50%; transform: scaleX(1.3496); top: 526.8px;">Займатися збором металобрухту на територіях, яких торкнулася війна</span>
<div class="rb" style="left:458.200px;top:540.200px;width:95.700px;height:11.500px"></div>
<span class="t rt" style="left: 465.3px; font-size: 9.4px; display: inline-block; transform-origin: 0px 50%; transform: scaleX(1.3195); top: 541.34px;">ПІДРИВНИКИ</span>
<!-- mouse cursor -->
<svg style="left:601.500px;top:460.500px" width="7" height="11" viewBox="0 0 7 11"><path d="M.5.500V8.500L2.500 6.700 4 10 5.200 9.500 3.800 6.300H6.300Z" fill="#222" stroke="#eee" stroke-width=".6"></path></svg>

</div>

</div>

<!--PPT_END-->
<!--GALLERY_START--><!-- ===== GALLERY ===== -->
<div class="a" id="gal" style="left:0;top:0;width:0;height:0">
<style>
#gal .tile{position:absolute;width:159.500px;height:89.300px;overflow:hidden;background:#13161a}
#gal .tile svg{left:0;top:0;width:100%;height:100%}
#gal .lb{position:absolute;height:19px;border-radius:4px;background:rgba(38,39,42,.74)}
#gal .nm{font-size:12.600px;color:#fff}
#gal .big{font-size:15.200px;font-weight:bold;color:#fff}
#gal .mic{position:absolute;width:13.300px;height:14.200px}
</style>
<svg width="0" height="0" style="left:0;top:0"><defs>
<filter id="gb" x="-5%" y="-5%" width="110%" height="110%"><feGaussianBlur stdDeviation="1.1"></feGaussianBlur></filter>
<filter id="gb2" x="-10%" y="-10%" width="120%" height="120%"><feGaussianBlur stdDeviation="2.4"></feGaussianBlur></filter>
<symbol id="mic" viewBox="0 0 14 15"><rect x="4.300" y=".8" width="5.400" height="8.600" rx="2.700" fill="#ea5560"></rect><path d="M2.600 7C2.600 12.600 11.400 12.600 11.400 7M7 11.300V13.400M4.200 13.700H9.800" fill="none" stroke="#ea5560" stroke-width="1.400" stroke-linecap="round"></path><path d="M1 14 12.800.8" stroke="#232427" stroke-width="3"></path><path d="M1 14 12.800.8" stroke="#ea5560" stroke-width="1.300" stroke-linecap="round"></path></symbol>
</defs></svg>
<!-- divider + handle -->
<div class="a" style="left:17px;top:59.500px;width:1346px;height:4.500px;background:#191715"></div><div class="a" style="left:864px;top:62px;width:9px;height:607px;background:#191715"></div>
<div class="a" style="left:866.500px;top:372px;width:3px;height:41px;border-radius:2px;background:#6d6f73"></div>
<div class="tile" style="left:879.0px;top:141.0px"><svg viewBox="0 0 160 90" preserveAspectRatio="none"><rect width="160" height="90" fill="#e9e3da"></rect>
<g filter="url(#gb)"><rect x="12" y="0" width="135" height="48" fill="#2c7257"></rect><rect x="12" y="47" width="135" height="3" fill="#cfc8bc"></rect>
<rect x="0" y="0" width="12" height="40" fill="#ede8e0"></rect>
<path d="M46 53H138L144 64H40Z" fill="#cf9556"></path><rect x="46" y="64" width="94" height="26" fill="#b87a40"></rect><rect x="50" y="68" width="86" height="22" fill="#c4874a"></rect>
<path d="M0 34C6 40 9 50 6 62L0 66Z" fill="#3aa6a0"></path><path d="M2 50C8 34 20 34 21 44 17 56 8 62 2 66Z" fill="#2c96ae"></path><path d="M0 72C4 56 19 54 23 62 21 78 10 86 0 90Z" fill="#44a446"></path>
<path d="M133 26C138 8 150 2 156 10 156 28 146 38 135 36Z" fill="#a9cfc2"></path><path d="M148 42C154 28 160 30 160 42V66C153 62 148 54 148 42Z" fill="#c9e2d8"></path>
<rect x="148" y="56" width="4" height="16" rx="2" fill="#4aa84a"></rect><path d="M143 72H157L155 84H145Z" fill="#f1eee8"></path>
<rect x="54" y="58" width="9" height="3" fill="#222"></rect><rect x="122" y="52" width="6" height="8" fill="#f3f3f3"></rect>
<ellipse cx="84" cy="58" rx="15" ry="22" fill="#e6b49e"></ellipse><ellipse cx="84" cy="45" rx="14" ry="10" fill="#f0c9b6"></ellipse>
<path d="M69 48H99V52C95 57 89 55 84 52 79 55 73 57 69 52Z" fill="#2a1c20"></path><path d="M69 49H99" stroke="#5a2a2a" stroke-width="1.500"></path>
<path d="M50 90C54 80 68 76 84 80 100 76 114 80 118 90Z" fill="#ece7e1"></path></g>
<g stroke="#7fb89c" stroke-width=".6" fill="none" opacity=".45"><circle cx="23" cy="9" r="5"></circle><path d="M96 6V36M84 30H116M86 30 104 14M34 30 56 18M66 24H80M66 28H78M118 6H132M116 11H134"></path></g></svg></div>
<div class="lb" style="left:881.7px;top:209.7px;width:121.3px"></div><svg class="mic" style="left:884.2px;top:212.4px"><use href="#mic"></use></svg><span class="t nm" style="left: 903.7px; letter-spacing: -0.042px; top: 213.83px;">Олександр Дєєв</span>
<div class="tile" style="left:1040.2px;top:141.0px"><svg viewBox="0 0 160 90" preserveAspectRatio="none"><rect width="160" height="90" fill="#e4e8ea"></rect>
<g filter="url(#gb)"><rect x="0" y="38" width="160" height="52" fill="#a9bac6"></rect><rect x="0" y="30" width="160" height="14" fill="#cdd6dc"></rect><rect x="0" y="0" width="160" height="30" fill="#eef0f0"></rect>
<rect x="28" y="0" width="6" height="62" fill="#47443e"></rect><rect x="93" y="0" width="8" height="66" fill="#47443e"></rect>
<g fill="none" stroke-linecap="round"><path d="M126.3 53.7L129.6 50.4M126.3 53.7L122.2 51.7M125.4 48.4L129.1 44.6M125.4 48.4L120.6 46.2M124.3 43.0L128.4 38.7M124.3 43.0L118.8 40.7M123.1 37.5L127.6 32.7M123.1 37.5L117.0 35.0M121.9 32.0L126.7 26.6M121.9 32.0L115.1 29.3M120.5 26.3L124.9 21.4M120.5 26.3L114.2 24.0M119.0 20.6L122.9 16.1M119.0 20.6L113.4 18.6M117.4 14.8L120.9 10.8M117.4 14.8L112.4 13.1M115.8 9.0L118.7 5.3M115.8 9.0L111.3 7.5M114.0 3.0L116.5 -0.1M114.0 3.0L110.2 1.8M130.8 54.1L135.3 52.9M130.8 54.1L128.2 50.3M132.8 49.3L137.9 48.4M132.8 49.3L130.0 44.8M135.0 44.7L140.9 44.0M135.0 44.7L132.3 39.4M137.6 40.2L144.2 39.9M137.6 40.2L134.9 34.2M140.5 35.8L147.7 36.0M140.5 35.8L138.0 29.0M143.7 31.6L150.4 32.2M143.7 31.6L141.9 25.2M147.3 27.5L153.2 28.4M147.3 27.5L146.0 21.7M151.2 23.5L156.4 24.6M151.2 23.5L150.3 18.3M155.4 19.7L159.9 20.9M155.4 19.7L154.9 15.1M160.0 16.0L163.8 17.2M160.0 16.0L159.8 12.0M124.0 57.0L125.8 52.7M124.0 57.0L119.4 56.8M121.8 53.6L123.6 48.7M121.8 53.6L116.5 53.7M119.4 50.4L121.2 44.7M119.4 50.4L113.5 50.7M116.8 47.3L118.5 40.9M116.8 47.3L110.3 48.0M114.1 44.3L115.6 37.2M114.1 44.3L107.0 45.4M111.2 41.4L112.3 34.8M111.2 41.4L104.7 42.8M108.2 38.6L108.8 32.7M108.2 38.6L102.4 40.1M104.9 36.0L105.3 30.6M104.9 36.0L99.9 37.5M101.6 33.4L101.6 28.8M101.6 33.4L97.2 35.0M98.0 31.0L97.9 27.0M98.0 31.0L94.3 32.5M133.2 59.4L137.6 60.9M133.2 59.4L133.0 54.8M135.9 57.6L140.8 59.6M135.9 57.6L136.1 52.3M138.7 55.9L144.0 58.7M138.7 55.9L139.4 50.0M141.6 54.6L147.1 58.1M141.6 54.6L142.9 48.1M144.5 53.5L150.2 57.9M144.5 53.5L146.5 46.5M147.4 52.7L152.3 57.2M147.4 52.7L149.9 46.5M150.5 52.1L154.5 56.5M150.5 52.1L153.2 46.7M153.6 51.8L156.8 56.0M153.6 51.8L156.4 47.3M156.8 51.8L159.3 55.7M156.8 51.8L159.5 48.0M160.0 52.0L161.9 55.5M160.0 52.0L162.6 49.0M124.8 60.8L125.2 56.2M124.8 60.8L120.4 62.0M123.0 59.4L122.9 54.2M123.0 59.4L118.2 61.4M121.1 58.3L120.4 52.4M121.1 58.3L115.9 61.1M119.1 57.4L117.6 51.0M119.1 57.4L113.6 61.1M116.9 56.7L114.5 49.8M116.9 56.7L111.3 61.3M114.6 56.1L111.8 50.1M114.6 56.1L109.9 60.9M112.1 55.8L109.2 50.6M112.1 55.8L108.3 60.4M109.6 55.7L106.6 51.2M109.6 55.7L106.5 60.0M106.8 55.7L104.0 52.1M106.8 55.7L104.4 59.7M104.0 56.0L101.3 53.0M104.0 56.0L102.2 59.6M130.6 53.0L134.9 51.3M130.6 53.0L127.5 49.6M131.6 48.2L136.5 46.2M131.6 48.2L127.9 44.5M132.5 43.4L137.8 40.8M132.5 43.4L128.2 39.3M133.2 38.3L139.0 35.3M133.2 38.3L128.3 34.0M133.8 33.1L140.1 29.6M133.8 33.1L128.2 28.5M134.1 27.8L139.8 24.3M134.1 27.8L128.9 23.7M134.3 22.3L139.4 19.1M134.3 22.3L129.5 18.8M134.4 16.7L138.8 13.7M134.4 16.7L130.0 13.7M134.3 10.9L138.0 8.2M134.3 10.9L130.3 8.4M134.0 5.0L137.2 2.5M134.0 5.0L130.6 2.9M132.4 57.1L137.0 57.0M132.4 57.1L130.6 52.8M134.5 53.8L139.8 53.9M134.5 53.8L132.7 48.9M136.7 50.8L142.6 51.0M136.7 50.8L134.8 45.2M138.9 47.9L145.5 48.3M138.9 47.9L136.9 41.6M141.1 45.2L148.3 45.8M141.1 45.2L139.1 38.2M143.3 42.6L149.9 43.4M143.3 42.6L141.6 36.1M145.5 40.2L151.4 41.1M145.5 40.2L144.2 34.3M147.6 38.0L152.9 39.0M147.6 38.0L146.7 32.7M149.8 35.9L154.4 37.0M149.8 35.9L149.2 31.3M152.0 34.0L155.9 35.1M152.0 34.0L151.6 30.0" stroke="#2f5228" stroke-width="2" opacity=".95"></path><path d="M128 64Q124 36 114 3M128 64Q134 36 160 16M128 64Q118 44 98 31M128 64Q142 50 160 52M128 64Q120 54 104 56M128 62Q136 38 134 5M128 64Q140 44 152 34" stroke="#2c4a26" stroke-width="1.300"></path></g>
<path d="M120 66H138L136 84H122Z" fill="#6e6e68"></path>
<g fill="#2f3a2a"><circle cx="6" cy="40" r="1.600"></circle><circle cx="12" cy="46" r="1.600"></circle><circle cx="9" cy="54" r="1.600"></circle><circle cx="16" cy="38" r="1.400"></circle><circle cx="15" cy="60" r="1.600"></circle><circle cx="4" cy="50" r="1.300"></circle><circle cx="20" cy="50" r="1.300"></circle></g><path d="M11 74 12 38M12 52 19 42" stroke="#3a3a30" stroke-width=".9"></path>
<path d="M32 30C28 8 42 -2 58 0 76 -2 88 10 86 30 88 46 86 58 92 66L60 74 30 66C28 54 34 42 32 30Z" fill="#33241f"></path>
<path d="M36 24C42 16 74 14 82 24 85 42 80 58 70 66 60 70 50 68 43 60 36 48 34 36 36 24Z" fill="#cb9c8c"></path>
<path d="M34 26C38 8 80 6 86 26 74 16 48 16 34 26Z" fill="#33241f"></path>
<path d="M41 33H54M66 33H79" stroke="#2e2222" stroke-width="1.900"></path><path d="M52 56H68" stroke="#96524e" stroke-width="1.600"></path><path d="M58 36 57 48 62 49" stroke="#b08070" stroke-width="1.200" fill="none"></path>
<path d="M10 90C14 72 28 62 42 60L60 74 90 60C104 64 114 76 116 90Z" fill="#3d4450"></path><path d="M68 70 90 60C100 64 108 72 110 82L84 76Z" fill="#66758c"></path></g></svg></div>
<div class="lb" style="left:1042.9px;top:209.7px;width:135.3px"></div><svg class="mic" style="left:1045.4px;top:212.4px"><use href="#mic"></use></svg><span class="t nm" style="left: 1063.7px; letter-spacing: -0.076px; top: 213.83px;">Анастасія Мантуло</span>
<div class="tile" style="left:1199.3px;top:141.0px"><div class="a" style="left:44px;top:9.500px;width:72px;height:72px;border-radius:7px;background:#5a2eb8"></div></div>
<div class="lb" style="left:1202.0px;top:209.7px;width:136.0px"></div><svg class="mic" style="left:1204.5px;top:212.4px"><use href="#mic"></use></svg><span class="t nm" style="left: 1223.7px; letter-spacing: 0.023px; top: 213.83px;">Oleksii Ovsiannikov</span>
<div class="tile" style="left:879.0px;top:230.7px"><svg viewBox="0 0 160 90" preserveAspectRatio="none"><rect width="160" height="90" fill="#7c4c2c"></rect>
<g filter="url(#gb)"><rect x="0" y="0" width="27" height="90" fill="#eaf1f7"></rect><rect x="24" y="0" width="7" height="90" fill="#b9bdc0"></rect>
<rect x="31" y="0" width="66" height="30" fill="#a4683a"></rect><rect x="97" y="0" width="63" height="30" fill="#6e4226"></rect><path d="M64 0V30M97 0V30M130 0V30" stroke="#5a3820" stroke-width="1.200"></path>
<rect x="120" y="0" width="40" height="42" fill="#4a2c1c"></rect>
<rect x="29" y="31" width="91" height="22" fill="#2c63c6"></rect><rect x="29" y="52" width="93" height="26" fill="#efd02c"></rect>
<rect x="120" y="41" width="16" height="27" fill="#8cc0dc"></rect><rect x="136" y="41" width="21" height="25" fill="#c23c2c"></rect><path d="M136 45 156 49 156 55 138 57Z" fill="#e8c8c0"></path><rect x="120" y="36" width="38" height="5" fill="#20140e"></rect>
<rect x="122" y="68" width="38" height="22" fill="#7c4c2c"></rect>
<path d="M56 90C52 62 54 36 60 26 66 14 86 12 94 24 102 38 100 60 106 78L124 90Z" fill="#c6b08a"></path>
<path d="M62 32C64 22 90 20 93 32 97 50 93 66 80 70 67 70 59 56 62 32Z" fill="#d6a792"></path>
<path d="M65 40H75M81 40H91" stroke="#54392e" stroke-width="1.600"></path><path d="M72 58H84" stroke="#a0645e" stroke-width="1.500"></path>
<path d="M59 24C66 13 88 12 95 26L93 35C85 27 70 27 62 35Z" fill="#ccb690"></path>
<path d="M38 90C42 80 58 74 70 74L92 74C106 76 120 82 126 90Z" fill="#b4a48c"></path></g></svg></div>
<div class="lb" style="left:881.7px;top:299.4px;width:92.5px"></div><span class="t nm" style="left: 884.2px; letter-spacing: 0.198px; top: 303.53px;">Ірина Войтова</span>
<div class="tile" style="left:1040.2px;top:230.7px"><svg viewBox="0 0 160 90" preserveAspectRatio="none"><rect width="160" height="90" fill="#cdb986"></rect>
<g filter="url(#gb)"><rect x="62" y="0" width="36" height="40" fill="#cfcfd3"></rect>
<rect x="0" y="0" width="63" height="90" fill="#bdb38c"></rect><rect x="13" y="12" width="22" height="78" fill="#ede5c6"></rect><rect x="42" y="14" width="12" height="70" fill="#d9cda2"></rect><rect x="0" y="36" width="62" height="4" fill="#a89c78"></rect><rect x="0" y="12" width="10" height="78" fill="#a9a07c"></rect>
<path d="M0 0H62L63 13C40 17 20 13 0 15Z" fill="#4e3e28"></path>
<rect x="97" y="0" width="63" height="90" fill="#c6ae74"></rect><rect x="104" y="0" width="10" height="90" fill="#dcca98"></rect><rect x="120" y="0" width="26" height="90" fill="#ecdfb4"></rect><rect x="97" y="0" width="6" height="90" fill="#806a40"></rect><rect x="150" y="0" width="10" height="90" fill="#9c8658"></rect>
<path d="M50 90C52 60 56 34 66 26 78 19 94 21 100 30 108 44 106 70 112 90Z" fill="#5e3f3e"></path>
<path d="M65 40C67 29 97 29 99 40 101 56 97 68 84 73 71 70 63 56 65 40Z" fill="#c79d94"></path>
<path d="M69 46H79M87 46H97" stroke="#543a3a" stroke-width="1.500"></path><path d="M77 62H91" stroke="#965c64" stroke-width="1.800"></path>
<path d="M28 90C34 76 52 68 66 68L100 68C116 70 128 78 132 90Z" fill="#4e463e"></path></g></svg></div>
<div class="lb" style="left:1042.9px;top:299.4px;width:149.6px"></div><svg class="mic" style="left:1045.4px;top:302.1px"><use href="#mic"></use></svg><span class="t nm" style="left: 1063.2px; letter-spacing: 0.033px; top: 303.53px;">Наталя Баришевська</span>
<div class="tile" style="left:1199.3px;top:230.7px"><svg viewBox="0 0 160 90" preserveAspectRatio="none"><rect width="160" height="90" fill="#d9d3cc"></rect>
<g filter="url(#gb)"><rect x="0" y="0" width="26" height="90" fill="#e1dcd6"></rect><rect x="25" y="0" width="32" height="74" fill="#a66e5e"></rect><rect x="35" y="6" width="6" height="58" fill="#cfc6c2"></rect><rect x="52" y="12" width="4" height="44" fill="#b4a29a"></rect>
<rect x="57" y="0" width="36" height="60" fill="#c4b6ac"></rect><rect x="91" y="0" width="20" height="64" fill="#e3e6e8"></rect><path d="M91 14H111M91 30H111M91 46H111" stroke="#9aa0a4" stroke-width="1"></path><rect x="96" y="18" width="8" height="10" fill="#b8a890"></rect>
<rect x="111" y="4" width="32" height="82" fill="#32261e"></rect><rect x="114" y="10" width="12" height="16" fill="#5e4e40"></rect><rect x="128" y="14" width="12" height="22" fill="#7a5a3e"></rect><rect x="114" y="34" width="26" height="3" fill="#6a543e"></rect>
<rect x="141" y="10" width="19" height="80" fill="#d9d0c4"></rect><rect x="141" y="10" width="6" height="80" fill="#8a5e3e"></rect>
<rect x="149" y="27" width="11" height="14" fill="#3a78c8"></rect><rect x="147" y="41" width="13" height="16" fill="#e6cf3a"></rect>
<path d="M60 24C58 10 72 3 83 7 95 5 101 18 97 32L95 56H62Z" fill="#c8a67c"></path>
<path d="M63 26C65 17 93 17 95 28 97 44 93 58 81 62 69 60 61 46 63 26Z" fill="#e2bba7"></path>
<rect x="63" y="32" width="13" height="9" rx="2.500" fill="none" stroke="#2a2020" stroke-width="1.600"></rect><rect x="80" y="32" width="13" height="9" rx="2.500" fill="none" stroke="#2a2020" stroke-width="1.600"></rect>
<path d="M73 54H85" stroke="#a0605c" stroke-width="1.300"></path>
<path d="M26 90C30 70 42 64 54 60L56 45 64 49 79 68 93 49 101 45 103 60C119 64 131 74 135 90Z" fill="#17151a"></path></g></svg></div>
<div class="lb" style="left:1202.0px;top:299.4px;width:115.7px"></div><svg class="mic" style="left:1204.5px;top:302.1px"><use href="#mic"></use></svg><span class="t nm" style="left: 1223.7px; letter-spacing: 0.114px; top: 303.53px;">Лілія Хатамова</span>
<div class="tile" style="left:879.0px;top:320.9px"></div>
<span class="t big" style="left: 910px; letter-spacing: -0.395px; top: 357.03px;">Бодарев Ілля</span>
<div class="lb" style="left:881.7px;top:389.6px;width:103.8px"></div><svg class="mic" style="left:884.2px;top:392.3px"><use href="#mic"></use></svg><span class="t nm" style="left: 903.4px; letter-spacing: -0.042px; top: 393.73px;">Бодарев Ілля</span>
<div class="tile" style="left:1040.2px;top:320.9px"><div class="a" style="left:43.800px;top:9.500px;width:72px;height:72px;border-radius:7px;background:#0e95a8"></div></div>
<div class="lb" style="left:1042.9px;top:389.6px;width:101.5px"></div><svg class="mic" style="left:1045.4px;top:392.3px"><use href="#mic"></use></svg><span class="t nm" style="left: 1063.2px; letter-spacing: 0.233px; top: 393.73px;">Лідія Набока</span>
<div class="tile" style="left:1199.3px;top:320.9px"><svg viewBox="0 0 160 90" preserveAspectRatio="none"><rect width="160" height="90" fill="#cbbba6"></rect>
<g filter="url(#gb)"><rect x="0" y="0" width="62" height="90" fill="#c2b098"></rect><rect x="112" y="0" width="48" height="90" fill="#d3c5b1"></rect><rect x="24" y="0" width="10" height="90" fill="#b6a48c" opacity=".6"></rect><rect x="0" y="0" width="12" height="90" fill="#b8a68e"></rect>
<path d="M74 0H126C128 10 128 26 124 36 120 50 110 57 99 57 87 55 79 45 77 30 75 18 72 8 74 0Z" fill="#d8a58d"></path>
<path d="M72 0H128L127 7C114 3 88 3 74 9Z" fill="#7c5c48"></path>
<path d="M82 19H95M105 19H118" stroke="#54382e" stroke-width="1.800"></path><path d="M92 44H108" stroke="#a4665c" stroke-width="1.500"></path><path d="M84 38C90 52 110 52 118 36" stroke="#c4937c" stroke-width="3" fill="none" opacity=".3"></path><path d="M99 22 97 34 103 35" stroke="#bc8a74" stroke-width="1.300" fill="none"></path>
<path d="M34 90C38 68 58 56 80 52L99 62 122 50C142 54 156 64 160 78V90Z" fill="#141215"></path>
<path d="M110 88 136 79 141 90H112Z" fill="#e9e9ee"></path><path d="M114 88 135 81" stroke="#222" stroke-width="1"></path></g></svg></div>
<div class="lb" style="left:1202.0px;top:389.6px;width:66.4px"></div><svg class="mic" style="left:1204.5px;top:392.3px"><use href="#mic"></use></svg><span class="t nm" style="left: 1223.7px; letter-spacing: -0.329px; top: 393.73px;">ХВК-18</span>
<div class="tile" style="left:879.0px;top:410.9px"></div>
<span class="t big" style="left: 925.6px; letter-spacing: -0.65px; top: 447.03px;">Учні СІЗО</span>
<div class="lb" style="left:881.7px;top:479.6px;width:80.3px"></div><svg class="mic" style="left:884.2px;top:482.3px"><use href="#mic"></use></svg><span class="t nm" style="left: 903.4px; letter-spacing: -0.384px; top: 483.73px;">Учні СІЗО</span>
<div class="tile" style="left:1040.2px;top:410.9px"></div>
<span class="t big" style="left: 1054.4px; letter-spacing: 0.144px; top: 447.03px;">Марина  Ляшен…</span>
<div class="lb" style="left:1042.9px;top:479.6px;width:130.4px"></div><svg class="mic" style="left:1045.4px;top:482.3px"><use href="#mic"></use></svg><span class="t nm" style="left: 1063.2px; letter-spacing: 0.397px; top: 483.73px;">Марина Ляшенко</span>
<div class="tile" style="left:1199.3px;top:410.9px"></div>
<span class="t big" style="left: 1219.3px; letter-spacing: 0.09px; top: 447.03px;">Микита Денщик</span>
<div class="lb" style="left:1202.0px;top:479.6px;width:120.0px"></div><svg class="mic" style="left:1204.5px;top:482.3px"><use href="#mic"></use></svg><span class="t nm" style="left: 1223.7px; letter-spacing: 0.226px; top: 483.73px;">Микита Денщик</span>
<div class="tile" style="left:879.0px;top:500.9px"></div>
<span class="t big" style="left: 894.4px; letter-spacing: 0.088px; top: 537.03px;">Маслюк  Мирос…</span>
<div class="lb" style="left:881.7px;top:569.6px;width:139.7px"></div><svg class="mic" style="left:884.2px;top:572.3px"><use href="#mic"></use></svg><span class="t nm" style="left: 903.4px; letter-spacing: 0.385px; top: 573.73px;">Маслюк Мирослав</span>
<div class="tile" style="left:1040.2px;top:500.9px"></div>
<span class="t big" style="left: 1083.3px; letter-spacing: 0.215px; top: 537.03px;">ДВК №12</span>
<div class="lb" style="left:1042.9px;top:569.6px;width:80.4px"></div><svg class="mic" style="left:1045.4px;top:572.3px"><use href="#mic"></use></svg><span class="t nm" style="left: 1063.2px; letter-spacing: 0.134px; top: 573.73px;">ДВК №12</span>
<div class="tile" style="left:1199.3px;top:500.9px"></div>
<span class="t big" style="left: 1223.7px; letter-spacing: -0.358px; top: 537.03px;">Артем Собакар</span>
<div class="lb" style="left:1202.0px;top:569.6px;width:116.8px"></div><svg class="mic" style="left:1204.5px;top:572.3px"><use href="#mic"></use></svg><span class="t nm" style="left: 1223.7px; letter-spacing: 0.112px; top: 573.73px;">Артем Собакар</span>
<div class="a" style="left:878px;top:229.500px;width:162.700px;height:92.500px;border:2.500px solid #22de82;border-radius:1px"></div>

<span class="t" style="left: 1266.2px; font-size: 40px; color: rgb(255, 255, 255); display: inline-block; transform-origin: 0px 50%; transform: scaleX(0.845); top: 166.84px;">O</span>
<span class="t" style="left: 1106.6px; font-size: 37.3px; color: rgb(255, 255, 255); display: inline-block; transform-origin: 0px 50%; transform: scaleX(1.1518); top: 348.43px;">Л</span>
<!-- more button -->
<div class="a" style="left:1082px;top:591px;width:74px;height:33px;border-radius:5px;background:#0d0e10"></div>
<svg style="left:1111.500px;top:603.500px" width="15" height="9" viewBox="0 0 15 9"><path d="M1.200 1.300 7.500 7.300 13.800 1.300" fill="none" stroke="#8e9095" stroke-width="1.800" stroke-linecap="round" stroke-linejoin="round"></path></svg>
</div>
<!--GALLERY_END-->
<!--BOTTOM_START--><!-- ===== ZOOM TOOLBAR ===== -->
<div class="a" id="tb" style="left:17px;top:669px;width:1346px;height:58px;background:#000"></div>
<div id="tbi" class="a" style="left:0;top:0;width:0;height:0">
<style>
#tbi .l{font-size:12.800px;color:#fff;-webkit-text-stroke:.3px #fff}
#tbi svg{fill:none;stroke:#fff;stroke-width:1.500;stroke-linecap:round;stroke-linejoin:round}
</style>
<!-- audio -->
<svg style="left:58px;top:678px" width="24" height="26" viewBox="0 0 24 26"><rect x="8.600" y="1.500" width="6.600" height="13" rx="3.300"></rect><path d="M5 11.500C5 20 19 20 19 11.500M12 18V23.500M8.500 24H15.500"></path><path d="M0.800 24.300 23.200 1.200" stroke="#e8265e" stroke-width="2.200"></path></svg>
<svg style="left:97.500px;top:688.500px" width="9" height="6" viewBox="0 0 9 6"><path d="M1 4.800 4.500 1.200 8 4.800" stroke-width="1.600"></path></svg>
<span class="t l" style="left: 57px; letter-spacing: -0.083px; top: 708.16px;">Звук</span>
<!-- video -->
<svg style="left:150.500px;top:684px" width="26" height="15" viewBox="0 0 26 15"><rect x=".9" y=".9" width="16.200" height="12.800" rx="3.200"></rect><path d="M17.500 5.300 24.500 1.500V13L17.500 9.300"></path></svg>
<svg style="left:196px;top:688.500px" width="9" height="6" viewBox="0 0 9 6"><path d="M1 4.800 4.500 1.200 8 4.800" stroke-width="1.600"></path></svg>
<span class="t l" style="left: 146.5px; letter-spacing: -0.973px; top: 708.16px;">Видео</span>
<!-- participants -->
<svg style="left:403.500px;top:682px" width="19" height="19" viewBox="0 0 19 19"><circle cx="6" cy="4" r="3"></circle><circle cx="13.800" cy="7" r="2.500"></circle><path d="M1 14C1 10.500 3 9.500 6 9.500S10.500 10.500 10.500 13V15.500C10.500 16.600 9.800 17.300 8.800 17.300H2.800C1.700 17.300 1 16.600 1 15.500ZM10.600 12.300C11.500 11.700 12.600 11.500 13.800 11.500 16.400 11.500 18 12.600 18 15 18 16.500 17.200 17.300 16 17.300H10"></path></svg>
<span class="t" style="left: 429px; font-size: 12px; color: rgb(185, 185, 185); letter-spacing: 0.241px; top: 683.04px;">23</span>
<svg style="left:461.500px;top:688.500px" width="9" height="6" viewBox="0 0 9 6"><path d="M1 4.800 4.500 1.200 8 4.800" stroke-width="1.600"></path></svg>
<span class="t l" style="left: 384.5px; letter-spacing: -0.455px; top: 708.16px;">Участники</span>
<!-- chat -->
<svg style="left:511px;top:682px" width="20" height="21" viewBox="0 0 20 21"><path d="M6.500 3.500C7 2 8.500 1 10.500 1H15C17.500 1 19 2.500 19 5V8.500C19 10.500 18 11.500 16.500 12"></path><path d="M4.500 4.800H12C14.500 4.800 15.800 6 15.800 8.500V12.500C15.800 15 14.500 16.300 12 16.300H9L5 19.800V16.300H4.500C2.200 16.300 1 15 1 12.500V8.500C1 6 2.200 4.800 4.500 4.800Z" fill="#000"></path><circle cx="5.200" cy="10.600" r="1" fill="#fff" stroke="none"></circle><circle cx="8.400" cy="10.600" r="1" fill="#fff" stroke="none"></circle><circle cx="11.600" cy="10.600" r="1" fill="#fff" stroke="none"></circle></svg>
<div class="a" style="left:527.200px;top:676.300px;width:16px;height:16px;border-radius:50%;background:#ee3a46;border:1px solid #000"></div>
<span class="t" style="left: 532.2px; font-size: 10.5px; font-weight: bold; color: rgb(255, 255, 255); top: 679.31px;">1</span>
<svg style="left:551.500px;top:688.500px" width="9" height="6" viewBox="0 0 9 6"><path d="M1 4.800 4.500 1.200 8 4.800" stroke-width="1.600"></path></svg>
<span class="t l" style="left: 513.4px; letter-spacing: -1.517px; top: 708.16px;">Чат</span>
<!-- react -->
<svg style="left:604.500px;top:680.500px" width="25" height="21" viewBox="0 0 25 21"><path d="M12.500 19.800C8 16 1 12 1 6.500 1 3.500 3.200 1 6.300 1 9 1 11.200 2.600 12.500 5 13.800 2.600 16 1 18.700 1 21.800 1 24 3.500 24 6.500 24 12 17 16 12.500 19.800Z"></path></svg>
<svg style="left:650.500px;top:688.500px" width="9" height="6" viewBox="0 0 9 6"><path d="M1 4.800 4.500 1.200 8 4.800" stroke-width="1.600"></path></svg>
<span class="t l" style="left: 576.1px; letter-spacing: -0.563px; top: 708.16px;">Отреагировать</span>
<!-- share -->
<div class="a" style="left:704px;top:682px;width:24px;height:18px;border-radius:3.500px;background:#22e18b"></div>
<svg style="left:710.500px;top:685.500px" width="11" height="11" viewBox="0 0 11 11"><path d="M5.500 10V2M2 5 5.500 1.500 9 5" stroke="#000" stroke-width="2.100"></path></svg>
<span class="t l" style="left: 683.4px; letter-spacing: -0.564px; top: 708.16px;">Поделиться</span>
<!-- info -->
<svg style="left:842px;top:679px" width="25" height="25" viewBox="0 0 25 25"><circle cx="12.500" cy="12.500" r="11.200"></circle><circle cx="12.500" cy="7.600" r=".9" fill="#fff"></circle><path d="M10.600 11.300H12.800V17.500M10.200 17.700H15.200" stroke-width="1.700"></path></svg>
<span class="t l" style="left: 773.7px; letter-spacing: -0.469px; top: 708.16px;">Информация о конференции</span>
<!-- apps -->
<svg style="left:976.500px;top:680px" width="23" height="22" viewBox="0 0 23 22"><path d="M1.200 8V5C1.200 2.500 2.700 1.200 5 1.200H9M21.500 13.500V17C21.500 19.500 20 20.800 17.700 20.800H13.500"></path><circle cx="17.300" cy="4.800" r="3.500"></circle><circle cx="4.800" cy="16.800" r="3.500"></circle></svg>
<span class="t l" style="left: 952.9px; letter-spacing: -0.319px; top: 708.16px;">Приложения</span>
<!-- more -->
<svg style="left:1072.800px;top:679px" width="25" height="25" viewBox="0 0 25 25"><circle cx="12.500" cy="12.500" r="11.200"></circle><circle cx="7.500" cy="12.500" r="1.100" fill="#fff" stroke-width=".6"></circle><circle cx="12.500" cy="12.500" r="1.100" fill="#fff" stroke-width=".6"></circle><circle cx="17.500" cy="12.500" r="1.100" fill="#fff" stroke-width=".6"></circle></svg>
<span class="t l" style="left: 1041.4px; letter-spacing: -0.326px; top: 708.16px;">Дополнительно</span>
<!-- leave -->
<svg style="left:1303px;top:678px" width="26" height="26" viewBox="0 0 26 26"><path d="M9.500 1H23V20.500L16.500 24.300V5.500L23 1" stroke="#e8265e" stroke-width="1.400"></path><circle cx="8.500" cy="5.800" r="2.900" fill="#000"></circle><path d="M5.500 10.500C7.500 9.500 9.500 9.600 11 10.800L13.500 14 11.800 15.200 10.500 13.800 10.200 17.500 12.200 23.500H9.600L8.200 19 5 23.800H2.300L5.800 17.300 5.800 13.200 3.300 15.500 1.800 14.200Z" fill="#000" stroke-width="1.300"></path></svg>
<span class="t l" style="left: 1297.5px; letter-spacing: -0.802px; top: 708.16px;">Выйти</span>
</div>
<!-- ===== WINDOWS TASKBAR ===== -->
<div class="a" id="wtb" style="left:0;top:727px;width:1366px;height:41px;background:linear-gradient(90deg,#3a302b 0,#332b29 330px,#2e2a2a 640px,#30282a 700px,#2c2a22 880px,#28291f 1000px,#1d283e 1090px,#1d2846 1366px)"></div>
<div id="wt" class="a" style="left:0;top:0;width:0;height:0">
<svg style="left:16px;top:740px" width="16" height="16" viewBox="0 0 16 16"><path d="M0 2.300 6.600 1.400V7.600H0ZM7.400 1.300 16 0V7.600H7.400ZM0 8.400H6.600V14.600L0 13.700ZM7.400 8.400H16V16L7.400 14.700Z" fill="#fff"></path></svg>
<div class="a" style="left:48px;top:728px;width:288px;height:38.500px;background:#f2f2f2"></div>
<svg style="left:60px;top:740px" width="17" height="17" viewBox="0 0 17 17"><circle cx="10.300" cy="6.300" r="5.200" fill="none" stroke="#2b2b2b" stroke-width="1.300"></circle><path d="M6.600 10.200 1 15.800" stroke="#2b2b2b" stroke-width="1.400"></path></svg>
<span class="t" style="left: 88.4px; font-size: 15px; color: rgb(60, 60, 60); letter-spacing: 0.041px; top: 741.1px;">Пошук</span>
<!-- ship -->
<svg style="left:261px;top:730px" width="73" height="36" viewBox="0 0 73 36"><path d="M4 20C1 10 9 5 19 7 25 0 38 0 45 4 55 0 69 3 71 13 74 20 73 30 66 33H8C1 32 1 24 4 20Z" fill="#1b2c78"></path><path d="M8 29C2 29 2 34.500 8 35.500H64C70 34.500 70 29 64 30Z" fill="#3c63c2"></path><g fill="#fff" opacity=".85"><circle cx="12" cy="9" r=".6"></circle><circle cx="31" cy="4" r=".6"></circle><circle cx="48" cy="5" r=".6"></circle><circle cx="65" cy="9" r=".6"></circle><circle cx="21" cy="11" r=".5"></circle><circle cx="60" cy="5" r=".5"></circle></g>
<path d="M13 5V19M9.500 9H16.500M57 3V19M53.500 7H60.500" stroke="#c9d0e0" stroke-width=".7"></path><path d="M13 6 29 15M57 4 46 13M13 9 6 19M57 8 66 19" stroke="#8a94b8" stroke-width=".4"></path>
<rect x="27.500" y="7" width="3.800" height="9" fill="#d8562c"></rect><rect x="35.500" y="6" width="3.800" height="10" fill="#d8562c"></rect><rect x="43.500" y="6" width="3.800" height="10" fill="#d8562c"></rect><rect x="27.500" y="6" width="3.800" height="2" fill="#1a1a1a"></rect><rect x="35.500" y="5" width="3.800" height="2" fill="#1a1a1a"></rect><rect x="43.500" y="5" width="3.800" height="2" fill="#1a1a1a"></rect>
<path d="M17 15H55V17.500H58V20H13V17.500H17Z" fill="#e9edf5"></path><path d="M17 17.500H55" stroke="#9aa4c0" stroke-width=".5"></path><path d="M5 20H67L62 31H11Z" fill="#26386a"></path><path d="M5 20H67L66 22.300H6Z" fill="#f3f5fa"></path><path d="M10 29H63L62 31H11Z" fill="#c23a3a"></path><g fill="#c9d4f0"><circle cx="16" cy="25" r=".5"></circle><circle cx="22" cy="25" r=".5"></circle><circle cx="28" cy="25" r=".5"></circle><circle cx="34" cy="25" r=".5"></circle><circle cx="40" cy="25" r=".5"></circle><circle cx="46" cy="25" r=".5"></circle><circle cx="52" cy="25" r=".5"></circle><circle cx="58" cy="25" r=".5"></circle></g></svg>
<!-- copilot -->
<svg style="left:351.500px;top:736.500px" width="23" height="23" viewBox="0 0 23 23" fill="none" stroke-linecap="round" stroke-linejoin="round"><defs><linearGradient id="cp1" gradientUnits="userSpaceOnUse" x1="6" y1="3" x2="20" y2="18"><stop offset="0" stop-color="#2f9cf0"></stop><stop offset=".45" stop-color="#7a5cf2"></stop><stop offset="1" stop-color="#ef5fa6"></stop></linearGradient><linearGradient id="cp2" gradientUnits="userSpaceOnUse" x1="3" y1="6" x2="16" y2="21"><stop offset="0" stop-color="#38c6a8"></stop><stop offset=".4" stop-color="#d8d23c"></stop><stop offset=".75" stop-color="#f59a32"></stop><stop offset="1" stop-color="#ec5a8e"></stop></linearGradient></defs><path d="M10 5.200H14.200L17.800 15.600" stroke="url(#cp1)" stroke-width="6.400"></path><path d="M13 17.800H8.800L5.200 7.400" stroke="url(#cp2)" stroke-width="6.400"></path><path d="M10 5.200H12.500" stroke="#3aa2ee" stroke-width="6.400"></path></svg>
<!-- store -->
<svg style="left:399.500px;top:736px" width="24" height="24" viewBox="0 0 24 24"><path d="M7.500 6V4.500C7.500 2.500 9 1.500 12 1.500S16.500 2.500 16.500 4.500V6" fill="none" stroke="#3aa0d8" stroke-width="1.600"></path><path d="M1.500 6H22.500V20C22.500 21.500 21.500 22.500 20 22.500H4C2.500 22.500 1.500 21.500 1.500 20Z" fill="#f4f4f4"></path><rect x="7.300" y="9.500" width="4.200" height="4.200" fill="#f25022"></rect><rect x="12.500" y="9.500" width="4.200" height="4.200" fill="#7fba00"></rect><rect x="7.300" y="14.700" width="4.200" height="4.200" fill="#00a4ef"></rect><rect x="12.500" y="14.700" width="4.200" height="4.200" fill="#ffb900"></rect></svg>
<!-- edge -->
<svg style="left:448.500px;top:735.500px" width="25" height="25" viewBox="0 0 25 25"><defs><linearGradient id="eg1" x1="0" y1="0" x2="1" y2="1"><stop offset="0" stop-color="#35c1f1"></stop><stop offset="1" stop-color="#1463c2"></stop></linearGradient><linearGradient id="eg2" x1="0" y1="0" x2="1" y2="0"><stop offset="0" stop-color="#2fa6e8"></stop><stop offset="1" stop-color="#5ad66a"></stop></linearGradient></defs><circle cx="12.500" cy="12.500" r="12" fill="url(#eg1)"></circle><path d="M1 10C3 3 10 -1 17 1.500 22 3.500 24.500 8 24.500 11.500 24.500 15 21.500 17 18 17 15.500 17 14.500 15.500 15.500 14 16.500 12.500 16 9 12 8.500 7 8 3 11 1 15Z" fill="url(#eg2)"></path><path d="M8 13C8 18 12 22.500 18 22 20 21.800 22 20.500 23 19 20 20 14 19.500 12 15 11 12.500 12 10 13 9 10 9 8 10.500 8 13Z" fill="#0c59a4"></path></svg>
<!-- explorer -->
<svg style="left:498.500px;top:737px" width="23" height="21" viewBox="0 0 23 21"><path d="M0 2.500C0 1.600.6 1 1.500 1H8L10 3H21.500C22.400 3 23 3.600 23 4.500V6H0Z" fill="#e8a825"></path><rect x="0" y="5" width="23" height="14.500" rx="1" fill="#fbd45c"></rect><path d="M4 12H19V19.500H4Z" fill="#3a8fd8"></path><path d="M7 15.500H16V19.500H7Z" fill="#fbd45c"></path></svg>
<!-- chrome -->
<svg style="left:546.500px;top:735.500px" width="26" height="26" viewBox="0 0 26 26"><circle cx="12" cy="12" r="11.500" fill="#fff"></circle><path d="M12 .5A11.500 11.500 0 0 1 22 6.300H12A5.700 5.700 0 0 0 7 9.200L2.700 5.200A11.500 11.500 0 0 1 12 .5Z" fill="#ea4335"></path><path d="M22 6.300A11.500 11.500 0 0 1 11 23.400L16 14.800A5.700 5.700 0 0 0 16.600 8.500Z" fill="#fbbc05"></path><path d="M2.700 5.200 7 13.500A5.700 5.700 0 0 0 14 17.300L11 23.400A11.500 11.500 0 0 1 2.700 5.200Z" fill="#34a853"></path><circle cx="12" cy="12" r="4.500" fill="#4285f4" stroke="#fff" stroke-width="1.200"></circle><circle cx="18.500" cy="19" r="6.300" fill="#3a2a28"></circle><circle cx="18.500" cy="18" r="3" fill="#e8c4b0"></circle><path d="M14.500 24C15 21.500 22 21.500 22.500 24Z" fill="#d8d0d8"></path></svg>
<!-- viber -->
<svg style="left:596px;top:736px" width="24" height="25" viewBox="0 0 24 25"><path d="M12 1C5 1 1.500 4 1.500 10.500 1.500 15 3 17.500 6 19V23.500L10 20C10.700 20 11.300 20.100 12 20.100 19 20.100 22.500 17 22.500 10.500S19 1 12 1Z" fill="#7d5fe8" stroke="#e9e4ff" stroke-width="1.400"></path><path d="M8 6C7 6.500 6.500 7.500 7 9 8.500 12.500 11 15 14.500 16.500 16 17 17 16.500 17.500 15.500L15.500 13.500 14 14.500C12 13.500 10.500 12 9.500 10L10.500 8.500Z" fill="#fff"></path><path d="M12.500 5.500C15.500 5.800 17.700 8 18 11M12.800 7.800C14.500 8 15.600 9.200 15.800 10.800" fill="none" stroke="#fff" stroke-width=".9"></path></svg>
<!-- zoom -->
<div class="a" style="left:633px;top:727px;width:47.500px;height:41px;background:rgba(255,255,255,.13)"></div>
<div class="a" style="left:645px;top:735.500px;width:24px;height:23px;border-radius:9px;background:radial-gradient(circle at 50% 35%,#2f7bf6,#0b4fd8 75%)"></div>
<span class="t" style="left: 648.5px; font-size: 11.5px; font-weight: bold; color: rgb(255, 255, 255); letter-spacing: 1.016px; top: 741.27px;">zm</span>
<div class="a" style="left:489.500px;top:765.500px;width:40px;height:2.500px;background:#8ec7ee"></div>
<div class="a" style="left:539.500px;top:765.500px;width:39.500px;height:2.500px;background:#8ec7ee"></div>
<div class="a" style="left:588.500px;top:765.500px;width:39.500px;height:2.500px;background:#8ec7ee"></div>
<div class="a" style="left:633px;top:765.500px;width:47.500px;height:2.500px;background:#8ec7ee"></div>
<!-- tray -->
<svg style="left:1073px;top:743.500px" width="13" height="8" viewBox="0 0 13 8"><path d="M.8 7 6.500 1.300 12.200 7" fill="none" stroke="#fff" stroke-width="1.300"></path></svg>
<svg style="left:1096.500px;top:739.500px" width="12" height="17" viewBox="0 0 12 17"><rect x="2.800" y=".5" width="6.400" height="10.500" rx="3.200" fill="#fff"></rect><path d="M.8 8C.8 15 11.200 15 11.200 8M6 13.300V16M3 16.300H9" fill="none" stroke="#fff" stroke-width="1.100"></path></svg>
<svg style="left:1118px;top:740.500px" width="18" height="15" viewBox="0 0 18 15"><path d="M.7 5H3.500L7.500 1.500V13.500L3.500 10H.7Z" fill="none" stroke="#fff" stroke-width="1.100" stroke-linejoin="round"></path><path d="M10 5C11.200 6.500 11.200 8.500 10 10M12.300 3C14.500 5.500 14.500 9.500 12.300 12M14.700 1.200C17.800 4.800 17.800 10.200 14.700 13.800" fill="none" stroke="#cfd3dc" stroke-width="1"></path></svg>
<svg style="left:1143px;top:739.500px" width="17" height="17" viewBox="0 0 17 17"><rect x=".7" y=".7" width="14.600" height="11" fill="none" stroke="#fff" stroke-width="1.200"></rect><path d="M4 14.700H12" stroke="#fff" stroke-width="1.200"></path><path d="M5 4.500H9.500M7 4.500 5.500 9M9.500 4 11 6.500 8.500 8" stroke="#fff" stroke-width="1" fill="none"></path><circle cx="13.300" cy="13" r="3" fill="#3a8fe8" stroke="#1d283e" stroke-width=".8"></circle></svg>
<svg style="left:1167px;top:742.500px" width="17" height="10" viewBox="0 0 17 10"><rect x=".6" y=".6" width="14" height="8.800" rx="1" fill="none" stroke="#fff" stroke-width="1.100"></rect><rect x="2.300" y="2.400" width="5.500" height="5.200" fill="#fff"></rect><rect x="15" y="3" width="1.600" height="4" fill="#fff"></rect></svg>
<svg style="left:1192.500px;top:740.500px" width="15" height="15" viewBox="0 0 15 15"><path d="M1 13.500C1 6.500 6.500 1.500 13.500 1.500M4.500 13.500C4.500 8.500 8.500 5 13.500 5M8 13.500C8 10.500 10.500 8.500 13.500 8.500" fill="none" stroke="#dfe3ea" stroke-width="1.200"></path><circle cx="12.300" cy="12.300" r="1.500" fill="#fff"></circle></svg>
<span class="t" style="left: 1218px; font-size: 12px; color: rgb(255, 255, 255); letter-spacing: -1.313px; top: 742.34px;">УКР</span>
<span class="t" style="left: 1265.5px; font-size: 12px; color: rgb(255, 255, 255); letter-spacing: -0.41px; top: 732.54px;">11:48</span>
<span class="t" style="left: 1253px; font-size: 12px; color: rgb(255, 255, 255); letter-spacing: -0.674px; top: 750.14px;">24.10.2025</span>
<svg style="left:1324.500px;top:740px" width="17" height="18" viewBox="0 0 17 18"><path d="M.7.700H16.300V12.700H11.500L8.500 16.500V12.700H.7Z" fill="none" stroke="#fff" stroke-width="1.200"></path></svg>
<div class="a" style="left:1361px;top:727px;width:1px;height:41px;background:#6b7488"></div>
</div>
<!--BOTTOM_END-->


</body></html>
